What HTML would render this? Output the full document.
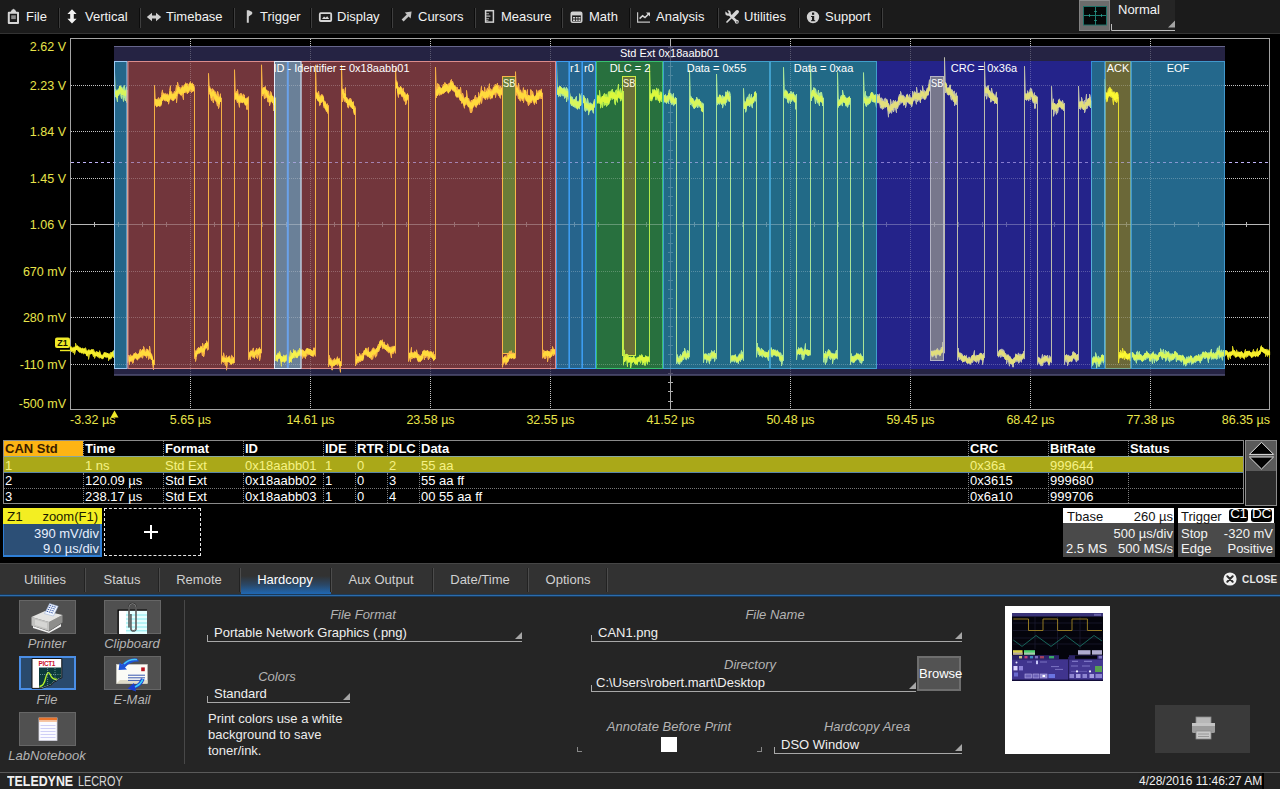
<!DOCTYPE html><html><head><meta charset="utf-8"><title>CAN Decode</title><style>
html,body{margin:0;padding:0;background:#000;}
body{width:1280px;height:789px;overflow:hidden;position:relative;font-family:"Liberation Sans",Arial,sans-serif;color:#fff;}
.abs{position:absolute;}
#menubar{position:absolute;left:0;top:0;width:1280px;height:34px;background:#1b1b1b;border-bottom:1px solid #333;box-sizing:border-box;}
#menubar .mi{position:absolute;top:8px;font-size:13px;line-height:18px;color:#f2f2f2;white-space:nowrap;}
#menubar .sep{position:absolute;top:8px;width:1px;height:20px;background:#3e3e3e;box-shadow:-1px 0 0 #0c0c0c;}
svg text{font-family:"Liberation Sans",Arial,sans-serif;}
.ov .gr g{stroke:#fff}.ov .gr{opacity:0.24}.ov .ax{stroke:#fff;opacity:0.28}.ov .axv{stroke:#fff;opacity:0.2}.ov .trg{stroke:#c8b8ff;opacity:0.6}
#tbl{position:absolute;left:3px;top:440px;width:1241px;height:64px;border:1px solid #8a8a8a;box-sizing:border-box;background:#000;}
.row{position:absolute;left:0;width:1239px;height:16px;font-size:13px;line-height:16px;white-space:nowrap;}
.row span{position:absolute;top:0;height:16px;}
.hdr span{font-weight:bold;}

#tbl .c{position:absolute;top:0;bottom:0;width:0;border-left:1px dotted #808080;}
.desc{position:absolute;font-size:13px;line-height:16px;white-space:nowrap;}
#tabs{position:absolute;left:0;top:563px;width:1280px;height:31px;background:#323232;border-top:1px solid #464646;box-sizing:border-box;border-bottom:0;}
#tabs .tb{position:absolute;top:0;height:30px;line-height:31px;font-size:13px;color:#d4d4d4;text-align:center;}
#tabs .ts{position:absolute;top:4px;width:1px;height:24px;background:#4c4c4c;box-shadow:-1px 0 0 #222;}
#panel{position:absolute;left:0;top:596px;width:1280px;height:177px;background:#252525;}
#footer{position:absolute;left:0;top:772px;width:1280px;height:17px;background:#242424;border-top:1px solid #5a5a5a;box-sizing:border-box;}
.btn{position:absolute;width:57px;height:34px;background:#505050;border:1px solid #666;box-sizing:border-box;}
.lbl{margin-top:0.8px;position:absolute;font-style:italic;font-size:13px;line-height:16px;color:#b4b4b4;white-space:nowrap;transform:translateX(-50%);}
.val{margin-top:0.7px;position:absolute;font-size:13px;line-height:16px;color:#f0f0f0;white-space:nowrap;}
.ul{position:absolute;height:1px;background:#a8a8a8;}
.ul:before{content:"";position:absolute;left:0;top:-6px;width:1px;height:6px;background:#a8a8a8;}
.ul:after{content:"";position:absolute;right:0;top:-9px;border-left:7px solid transparent;border-bottom:7px solid #a6a6a6;}
</style></head><body>
<div id="menubar">
<div class="mi" style="left:26px">File</div>
<div class="mi" style="left:85px">Vertical</div>
<div class="mi" style="left:166px">Timebase</div>
<div class="mi" style="left:260px">Trigger</div>
<div class="mi" style="left:337px">Display</div>
<div class="mi" style="left:418px">Cursors</div>
<div class="mi" style="left:501px">Measure</div>
<div class="mi" style="left:589px">Math</div>
<div class="mi" style="left:656px">Analysis</div>
<div class="mi" style="left:744px">Utilities</div>
<div class="mi" style="left:825px">Support</div>
<div class="sep" style="left:59px"></div>
<div class="sep" style="left:140px"></div>
<div class="sep" style="left:234px"></div>
<div class="sep" style="left:311px"></div>
<div class="sep" style="left:392px"></div>
<div class="sep" style="left:475px"></div>
<div class="sep" style="left:562px"></div>
<div class="sep" style="left:630px"></div>
<div class="sep" style="left:718px"></div>
<div class="sep" style="left:799px"></div>
<div class="sep" style="left:882px"></div>
<svg class="abs" style="left:0;top:0" width="900" height="34" viewBox="0 0 900 34">
<g fill="#d6d6d6" stroke="none">
<!-- File clipboard -->
<path d="M8.8 12.8 H18 V23 H8.8 Z" fill="none" stroke="#d6d6d6" stroke-width="2" stroke-linejoin="round"/>
<path d="M10.6 12 L12 9.6 L13 9.6 L13.4 8.6 L14 9.6 L15 9.6 L16.3 12 Z"/>
<rect x="11.2" y="15.3" width="4.6" height="3.8" fill="#8c8c8c"/>
<!-- Vertical -->
<path d="M72 9.2 L76.6 14 L73.8 14 L73.8 18.8 L76.6 18.8 L72 23.6 L67.4 18.8 L70.2 18.8 L70.2 14 L67.4 14 Z" fill="#f2f2f2"/>
<!-- Timebase -->
<path d="M146.8 17 L152 12.8 L152 15.5 L156 15.5 L156 12.8 L161.2 17 L156 21.2 L156 18.5 L152 18.5 L152 21.2 Z" fill="#cfcfcf"/>
<!-- Trigger flag -->
<path d="M246.8 10.2 L248.8 10.2 L248.8 22.8 L246.8 22.8 Z M248.8 10.2 L252.2 12 L252.2 14 L248.8 16.4 Z" fill="#cfcfcf"/>
<!-- Display -->
<rect x="319.8" y="13.2" width="11.4" height="7.8" rx="1" fill="none" stroke="#d6d6d6" stroke-width="1.8"/>
<path d="M322 19 L324 16.4 L325.6 17.8 L327.2 16.2 L329.2 19 Z"/>
<!-- Cursors arrow -->
<path d="M401.6 19.4 L406.8 14.6 L404.8 12.6 L411.6 11.6 L410.6 18.4 L408.6 16.4 L403.6 21.4 Z" fill="#c4c4c4"/>
<!-- Measure ruler -->
<rect x="485.6" y="10.7" width="7.8" height="11.4" fill="none" stroke="#d0d0d0" stroke-width="1.5"/>
<path d="M486 13.2 h3 v1 h-3z M486 15.6 h4.4 v1.2 h-4.4z M486 18.2 h3 v1 h-3z M486 20.2 h2.4 v0.8 h-2.4z" fill="#b4b4b4"/>
<!-- Math calculator -->
<rect x="571.3" y="12.2" width="10.4" height="10" rx="1.2" fill="none" stroke="#d0d0d0" stroke-width="1.6"/>
<rect x="572" y="13" width="9" height="2.4" fill="#d0d0d0"/>
<path d="M573 17h2v1.5h-2z M575.8 17h1.8v1.5h-1.8z M578.4 17h2v1.5h-2z M573 19.6h2v1.5h-2z M575.8 19.6h1.8v1.5h-1.8z M578.4 19.6h2v1.5h-2z" fill="#d0d0d0"/>
<!-- Analysis -->
<path d="M637.6 12.2 V22.2 H650" fill="none" stroke="#c4c4c4" stroke-width="1.2"/>
<path d="M639.6 18.6 L642.6 15.8 L645 17.6 L648.6 14" fill="none" stroke="#d6d6d6" stroke-width="1.5"/>
<path d="M646 12.4 L650 12.4 L650 16.4 Z"/>
<!-- Utilities -->
<path d="M728.4 13.4 L736.4 21.4" stroke="#d6d6d6" stroke-width="2.6" fill="none" stroke-linecap="round"/>
<circle cx="728" cy="13" r="2.7"/>
<path d="M725 10 L728.4 13.2 L726.6 9.6 Z" fill="#1b1b1b" stroke="#1b1b1b" stroke-width="1.2"/>
<circle cx="736.8" cy="21.8" r="2"/><circle cx="737" cy="22" r="0.8" fill="#1b1b1b"/>
<path d="M737.2 11.8 L733.6 15.4" stroke="#d6d6d6" stroke-width="3.6" fill="none" stroke-linecap="round"/>
<path d="M733.6 15.4 L727 22" stroke="#d6d6d6" stroke-width="1.7" fill="none" stroke-linecap="round"/>
<!-- Support -->
<circle cx="813" cy="17.1" r="6.2" fill="#d2d2d2"/>
<rect x="812" y="16" width="2.2" height="5" fill="#1b1b1b"/><rect x="812" y="12.6" width="2.2" height="2.2" fill="#1b1b1b"/><rect x="811" y="16" width="2" height="1" fill="#1b1b1b"/><rect x="811" y="20.2" width="4.2" height="1" fill="#1b1b1b"/>
</g></svg>
<div class="abs" style="left:1079px;top:0;width:31px;height:31px;background:#6c6c6c;border:1px solid #828282;border-top-color:#8c8c8c;box-sizing:border-box;"></div>
<div class="abs" style="left:1110px;top:0;width:65px;height:30px;background:#252525;"></div>
<svg class="abs" style="left:1079px;top:0" width="100" height="34" viewBox="1079 0 100 34">
<rect x="1083.5" y="6.5" width="23" height="18.5" fill="#040707" stroke="#1d6f66" stroke-width="1"/>
<path d="M1084 15.5 H1106 M1095.5 7 V25" stroke="#1f7e73" stroke-width="1" fill="none"/>
<path d="M1089.5 14 V17 M1101.5 14 V17 M1094 11.5 H1097 M1094 20.5 H1097" stroke="#2a9a8c" stroke-width="0.8" fill="none"/>
<path d="M1111.5 24 V30.5 H1175" stroke="#bdbdbd" stroke-width="1" fill="none"/>
<path d="M1175 20.6 V27.6 H1168 Z" fill="#a4a4a4"/>
</svg>
<div class="abs" style="left:1118px;top:2px;font-size:13px;line-height:16px;color:#f4f4f4;">Normal</div>
</div>
<svg class="abs" style="left:0;top:35px" width="1280" height="400" viewBox="0 35 1280 400">
<g class="gr">
<g stroke="#b4b4b4" stroke-width="1" stroke-dasharray="1 1" fill="none">
<path d="M190.5 39 V409"/>
<path d="M310.5 39 V409"/>
<path d="M430.5 39 V409"/>
<path d="M550.5 39 V409"/>
<path d="M790.5 39 V409"/>
<path d="M910.5 39 V409"/>
<path d="M1030.5 39 V409"/>
<path d="M1150.5 39 V409"/>
<path d="M71 85.5 H1269"/>
<path d="M71 131.5 H1269"/>
<path d="M71 178.5 H1269"/>
<path d="M71 271.5 H1269"/>
<path d="M71 317.5 H1269"/>
<path d="M71 364.5 H1269"/>
</g>
</g>
<g class="ax" stroke="#9c9c9c" stroke-width="1" fill="none">
<path d="M71 224.5 H1269"/>
<path d="M94.5 222 V227"/>
<path d="M118.5 222 V227"/>
<path d="M142.5 222 V227"/>
<path d="M166.5 222 V227"/>
<path d="M214.5 222 V227"/>
<path d="M238.5 222 V227"/>
<path d="M262.5 222 V227"/>
<path d="M286.5 222 V227"/>
<path d="M334.5 222 V227"/>
<path d="M358.5 222 V227"/>
<path d="M382.5 222 V227"/>
<path d="M406.5 222 V227"/>
<path d="M454.5 222 V227"/>
<path d="M478.5 222 V227"/>
<path d="M502.5 222 V227"/>
<path d="M526.5 222 V227"/>
<path d="M574.5 222 V227"/>
<path d="M598.5 222 V227"/>
<path d="M622.5 222 V227"/>
<path d="M646.5 222 V227"/>
<path d="M694.5 222 V227"/>
<path d="M718.5 222 V227"/>
<path d="M742.5 222 V227"/>
<path d="M766.5 222 V227"/>
<path d="M814.5 222 V227"/>
<path d="M838.5 222 V227"/>
<path d="M862.5 222 V227"/>
<path d="M886.5 222 V227"/>
<path d="M934.5 222 V227"/>
<path d="M958.5 222 V227"/>
<path d="M982.5 222 V227"/>
<path d="M1006.5 222 V227"/>
<path d="M1054.5 222 V227"/>
<path d="M1078.5 222 V227"/>
<path d="M1102.5 222 V227"/>
<path d="M1126.5 222 V227"/>
<path d="M1174.5 222 V227"/>
<path d="M1198.5 222 V227"/>
<path d="M1222.5 222 V227"/>
<path d="M1246.5 222 V227"/>
</g>
<g class="axv" stroke="#9c9c9c" stroke-width="1" fill="none">
<path d="M670.5 39 V409"/>
<path d="M668 47.5 H673"/>
<path d="M668 57.5 H673"/>
<path d="M668 66.5 H673"/>
<path d="M668 75.5 H673"/>
<path d="M668 94.5 H673"/>
<path d="M668 103.5 H673"/>
<path d="M668 112.5 H673"/>
<path d="M668 122.5 H673"/>
<path d="M668 140.5 H673"/>
<path d="M668 150.5 H673"/>
<path d="M668 159.5 H673"/>
<path d="M668 168.5 H673"/>
<path d="M668 187.5 H673"/>
<path d="M668 196.5 H673"/>
<path d="M668 205.5 H673"/>
<path d="M668 215.5 H673"/>
<path d="M668 233.5 H673"/>
<path d="M668 243.5 H673"/>
<path d="M668 252.5 H673"/>
<path d="M668 261.5 H673"/>
<path d="M668 280.5 H673"/>
<path d="M668 289.5 H673"/>
<path d="M668 298.5 H673"/>
<path d="M668 308.5 H673"/>
<path d="M668 326.5 H673"/>
<path d="M668 336.5 H673"/>
<path d="M668 345.5 H673"/>
<path d="M668 354.5 H673"/>
<path d="M668 373.5 H673"/>
<path d="M668 382.5 H673"/>
<path d="M668 391.5 H673"/>
<path d="M668 401.5 H673"/>
</g>
<path class="trg" d="M71 162.5 H1269" stroke="#b4b0f0" stroke-width="1" stroke-dasharray="3 3" fill="none"/>
<rect x="70.5" y="38.5" width="1199" height="371" stroke="#a4a4a4" fill="none"/>
<rect x="114" y="46" width="1111" height="329.5" fill="#252343"/>
<rect x="114" y="46" width="1111" height="1" fill="#66668c"/>
<rect x="114" y="374.5" width="1111" height="1" fill="#66668c"/>
<rect x="114.0" y="61.0" width="13.5" height="308.0" fill="#24668a"/>
<rect x="127.5" y="61.0" width="428.5" height="308.0" fill="#72363c"/>
<rect x="274.0" y="61.0" width="27.5" height="308.0" fill="#6a8098"/>
<rect x="502.0" y="76.0" width="14.0" height="278.0" fill="#6a7c38"/>
<rect x="556.0" y="61.0" width="40.0" height="308.0" fill="#26648c"/>
<rect x="596.0" y="61.0" width="67.0" height="308.0" fill="#28703e"/>
<rect x="622.0" y="76.0" width="14.0" height="280.0" fill="#6c7038"/>
<rect x="663.0" y="61.0" width="107.0" height="308.0" fill="#226a87"/>
<rect x="770.0" y="61.0" width="107.0" height="308.0" fill="#226a87"/>
<rect x="877.0" y="61.0" width="214.0" height="308.0" fill="#24238a"/>
<rect x="930.0" y="76.0" width="14.0" height="285.0" fill="#77778c"/>
<rect x="1091.0" y="61.0" width="14.0" height="308.0" fill="#24668a"/>
<rect x="1105.0" y="61.0" width="26.0" height="308.0" fill="#6b6838"/>
<rect x="1131.0" y="61.0" width="94.0" height="308.0" fill="#24688c"/>
<g class="ov"><g class="gr">
<g stroke="#b4b4b4" stroke-width="1" stroke-dasharray="1 1" fill="none">
<path d="M190.5 39 V409"/>
<path d="M310.5 39 V409"/>
<path d="M430.5 39 V409"/>
<path d="M550.5 39 V409"/>
<path d="M790.5 39 V409"/>
<path d="M910.5 39 V409"/>
<path d="M1030.5 39 V409"/>
<path d="M1150.5 39 V409"/>
<path d="M71 85.5 H1269"/>
<path d="M71 131.5 H1269"/>
<path d="M71 178.5 H1269"/>
<path d="M71 271.5 H1269"/>
<path d="M71 317.5 H1269"/>
<path d="M71 364.5 H1269"/>
</g>
</g>
<g class="ax" stroke="#9c9c9c" stroke-width="1" fill="none">
<path d="M71 224.5 H1269"/>
<path d="M94.5 222 V227"/>
<path d="M118.5 222 V227"/>
<path d="M142.5 222 V227"/>
<path d="M166.5 222 V227"/>
<path d="M214.5 222 V227"/>
<path d="M238.5 222 V227"/>
<path d="M262.5 222 V227"/>
<path d="M286.5 222 V227"/>
<path d="M334.5 222 V227"/>
<path d="M358.5 222 V227"/>
<path d="M382.5 222 V227"/>
<path d="M406.5 222 V227"/>
<path d="M454.5 222 V227"/>
<path d="M478.5 222 V227"/>
<path d="M502.5 222 V227"/>
<path d="M526.5 222 V227"/>
<path d="M574.5 222 V227"/>
<path d="M598.5 222 V227"/>
<path d="M622.5 222 V227"/>
<path d="M646.5 222 V227"/>
<path d="M694.5 222 V227"/>
<path d="M718.5 222 V227"/>
<path d="M742.5 222 V227"/>
<path d="M766.5 222 V227"/>
<path d="M814.5 222 V227"/>
<path d="M838.5 222 V227"/>
<path d="M862.5 222 V227"/>
<path d="M886.5 222 V227"/>
<path d="M934.5 222 V227"/>
<path d="M958.5 222 V227"/>
<path d="M982.5 222 V227"/>
<path d="M1006.5 222 V227"/>
<path d="M1054.5 222 V227"/>
<path d="M1078.5 222 V227"/>
<path d="M1102.5 222 V227"/>
<path d="M1126.5 222 V227"/>
<path d="M1174.5 222 V227"/>
<path d="M1198.5 222 V227"/>
<path d="M1222.5 222 V227"/>
<path d="M1246.5 222 V227"/>
</g>
<g class="axv" stroke="#9c9c9c" stroke-width="1" fill="none">
<path d="M670.5 39 V409"/>
<path d="M668 47.5 H673"/>
<path d="M668 57.5 H673"/>
<path d="M668 66.5 H673"/>
<path d="M668 75.5 H673"/>
<path d="M668 94.5 H673"/>
<path d="M668 103.5 H673"/>
<path d="M668 112.5 H673"/>
<path d="M668 122.5 H673"/>
<path d="M668 140.5 H673"/>
<path d="M668 150.5 H673"/>
<path d="M668 159.5 H673"/>
<path d="M668 168.5 H673"/>
<path d="M668 187.5 H673"/>
<path d="M668 196.5 H673"/>
<path d="M668 205.5 H673"/>
<path d="M668 215.5 H673"/>
<path d="M668 233.5 H673"/>
<path d="M668 243.5 H673"/>
<path d="M668 252.5 H673"/>
<path d="M668 261.5 H673"/>
<path d="M668 280.5 H673"/>
<path d="M668 289.5 H673"/>
<path d="M668 298.5 H673"/>
<path d="M668 308.5 H673"/>
<path d="M668 326.5 H673"/>
<path d="M668 336.5 H673"/>
<path d="M668 345.5 H673"/>
<path d="M668 354.5 H673"/>
<path d="M668 373.5 H673"/>
<path d="M668 382.5 H673"/>
<path d="M668 391.5 H673"/>
<path d="M668 401.5 H673"/>
</g>
<path class="trg" d="M71 162.5 H1269" stroke="#b4b0f0" stroke-width="1" stroke-dasharray="3 3" fill="none"/></g>
<g fill="none" stroke-linejoin="round">
<path d="M70.5 346.3 L70.5 350.4 L71.5 351.7 L71.5 346.8 L72.5 347.6 L72.5 351.8 L73.5 353.1 L73.5 347.1 L74.5 346.9 L74.5 354.5 L75.5 350.7 L75.5 343.2 L76.5 345.7 L76.5 349.5 L77.5 350.5 L77.5 345.8 L78.5 346.6 L78.5 351.1 L79.5 352.5 L79.5 347.1 L80.5 347.7 L80.5 352.3 L81.5 353.2 L81.5 348.5 L82.5 348 L82.5 353.2 L83.5 354 L83.5 348.5 L84.5 348.7 L84.5 353.5 L85.5 353.8 L85.5 347.7 L86.5 350.5 L86.5 355.6 L87.5 356.2 L87.5 350.8 L88.5 349.6 L88.5 359.4 L89.5 355.1 L89.5 349.9 L90.5 350.1 L90.5 354 L91.5 353.5 L91.5 349.5 L92.5 349.6 L92.5 353.9 L93.5 356.8 L93.5 349.4 L94.5 352.1 L94.5 358.4 L95.5 356.4 L95.5 352.3 L96.5 351.2 L96.5 356 L97.5 356.9 L97.5 352 L98.5 352.3 L98.5 357.6 L99.5 358.2 L99.5 350.7 L100.5 353.1 L100.5 357.8 L101.5 358.6 L101.5 354.8 L102.5 354.8 L102.5 358.9 L103.5 358.1 L103.5 353.9 L104.5 352 L104.5 356.7 L105.5 356.8 L105.5 352.7 L106.5 352.8 L106.5 357.7 L107.5 357.5 L107.5 353.1 L108.5 354.1 L108.5 360.8 L109.5 358.5 L109.5 354 L110.5 352.4 L110.5 359.2 L111.5 358 L111.5 352.7 L112.5 351.8 L112.5 356.1 L113.5 357.9 L113.5 350.7 L114.5 357.1" stroke="#d2ca1c" stroke-width="1"/><path d="M70.5 346.8 L70.5 349.4 L71.5 350.9 L71.5 348.5 L72.5 348.5 L72.5 350.4 L73.5 350.6 L73.5 348.5 L74.5 348.1 L74.5 351 L75.5 350 L75.5 347 L76.5 346.4 L76.5 349.4 L77.5 349.1 L77.5 346.2 L78.5 348.3 L78.5 350.3 L79.5 351.6 L79.5 348.9 L80.5 348.4 L80.5 351.8 L81.5 352.5 L81.5 349.1 L82.5 349.1 L82.5 352.1 L83.5 352.2 L83.5 349.8 L84.5 348.8 L84.5 352.1 L85.5 353.2 L85.5 350 L86.5 351.3 L86.5 355.1 L87.5 355 L87.5 352.4 L88.5 350.7 L88.5 353.7 L89.5 353.6 L89.5 351.3 L90.5 351.1 L90.5 353.8 L91.5 353.3 L91.5 350.1 L92.5 350 L92.5 353.4 L93.5 354.3 L93.5 351.8 L94.5 352.4 L94.5 355.4 L95.5 355.7 L95.5 353.2 L96.5 353 L96.5 355.2 L97.5 356 L97.5 352.3 L98.5 353.2 L98.5 355.7 L99.5 356.7 L99.5 353 L100.5 354.5 L100.5 357 L101.5 357.7 L101.5 355.6 L102.5 356.2 L102.5 358.1 L103.5 357.7 L103.5 354.9 L104.5 353.6 L104.5 356 L105.5 356.9 L105.5 353.1 L106.5 354.3 L106.5 356.2 L107.5 356.4 L107.5 353.5 L108.5 354.4 L108.5 356.9 L109.5 358.6 L109.5 355.2 L110.5 355.1 L110.5 357.5 L111.5 356.5 L111.5 353.2 L112.5 352.2 L112.5 356 L113.5 356.2 L113.5 352.7" stroke="#f6ee2c" stroke-width="1.2"/>
<path d="M1224.5 351.1 L1225.5 350.5 L1225.5 355.8 L1226.5 354.9 L1226.5 350.8 L1227.5 352.1 L1227.5 357.4 L1228.5 359.9 L1228.5 352.5 L1229.5 351.9 L1229.5 357.4 L1230.5 358.8 L1230.5 351.7 L1231.5 351.3 L1231.5 355.6 L1232.5 354.8 L1232.5 346.2 L1233.5 350.1 L1233.5 355.2 L1234.5 356.3 L1234.5 350.4 L1235.5 352.5 L1235.5 357.5 L1236.5 356.9 L1236.5 349.8 L1237.5 352 L1237.5 356.4 L1238.5 356 L1238.5 351.8 L1239.5 352.1 L1239.5 357.2 L1240.5 358.7 L1240.5 352.2 L1241.5 351.1 L1241.5 357.5 L1242.5 357.5 L1242.5 352.4 L1243.5 353.6 L1243.5 358.4 L1244.5 359.2 L1244.5 351.8 L1245.5 349.4 L1245.5 357.2 L1246.5 357.3 L1246.5 351.5 L1247.5 351.2 L1247.5 356.8 L1248.5 355.4 L1248.5 351.1 L1249.5 351.1 L1249.5 355.1 L1250.5 356.3 L1250.5 352.6 L1251.5 352.7 L1251.5 357.5 L1252.5 357.2 L1252.5 352.2 L1253.5 349.3 L1253.5 356.6 L1254.5 355.8 L1254.5 351.2 L1255.5 351.7 L1255.5 356.8 L1256.5 355.9 L1256.5 350.9 L1257.5 348.5 L1257.5 356.6 L1258.5 356.3 L1258.5 351.8 L1259.5 350.3 L1259.5 354.5 L1260.5 352.7 L1260.5 347.1 L1261.5 345.6 L1261.5 351.1 L1262.5 351.8 L1262.5 347.1 L1263.5 348.5 L1263.5 352.7 L1264.5 353.5 L1264.5 348.9 L1265.5 349.6 L1265.5 356.6 L1266.5 354.6 L1266.5 349.2 L1267.5 349.5 L1267.5 356.6 L1268.5 354.2 L1268.5 350.4 L1269.5 349.1 L1269.5 358.2" stroke="#d2ca1c" stroke-width="1"/><path d="M1224.5 351.3 L1225.5 351.2 L1225.5 353.8 L1226.5 353.8 L1226.5 350.8 L1227.5 352.3 L1227.5 356.1 L1228.5 356.1 L1228.5 353.4 L1229.5 352.6 L1229.5 355.3 L1230.5 355.6 L1230.5 352.8 L1231.5 352.4 L1231.5 354.9 L1232.5 354 L1232.5 350.9 L1233.5 350.8 L1233.5 353.1 L1234.5 354.3 L1234.5 350.9 L1235.5 352.7 L1235.5 356.2 L1236.5 356.6 L1236.5 352.9 L1237.5 352.9 L1237.5 355.4 L1238.5 356 L1238.5 352.9 L1239.5 352.5 L1239.5 356.2 L1240.5 356.3 L1240.5 352.5 L1241.5 352.4 L1241.5 355.4 L1242.5 356.2 L1242.5 353.4 L1243.5 354.4 L1243.5 357.4 L1244.5 356.5 L1244.5 353.6 L1245.5 352.3 L1245.5 355.6 L1246.5 354.8 L1246.5 351.9 L1247.5 351.6 L1247.5 355.3 L1248.5 354.1 L1248.5 352 L1249.5 351.5 L1249.5 354.4 L1250.5 355.5 L1250.5 352.7 L1251.5 353.3 L1251.5 357.1 L1252.5 355.7 L1252.5 352.4 L1253.5 352.3 L1253.5 355.4 L1254.5 355.7 L1254.5 352.3 L1255.5 353 L1255.5 356.2 L1256.5 355.1 L1256.5 352.6 L1257.5 352.5 L1257.5 355.5 L1258.5 355.3 L1258.5 352.2 L1259.5 351.2 L1259.5 354.5 L1260.5 352.2 L1260.5 349.4 L1261.5 347.1 L1261.5 351 L1262.5 351.5 L1262.5 347.8 L1263.5 349.3 L1263.5 352.2 L1264.5 352.5 L1264.5 349.5 L1265.5 349.6 L1265.5 353.1 L1266.5 354.1 L1266.5 350.6 L1267.5 351.5 L1267.5 354.7 L1268.5 354.3 L1268.5 351 L1269.5 351.8 L1269.5 355.2" stroke="#f6ee2c" stroke-width="1.2"/>
<path d="M113.5 350.7 L114.5 357.1 L114.5 72.1 L115.5 97.1 L115.5 89.1 L116.5 90.3 L116.5 97.4 L117.5 101.9 L117.5 90.2 L118.5 88.6 L118.5 95.8 L119.5 94.5 L119.5 86.5 L120.5 85.6 L120.5 94.5 L121.5 98.6 L121.5 86.7 L122.5 88.3 L122.5 95.7 L123.5 101.5 L123.5 86.7 L124.5 85.4 L124.5 98.6 L125.5 101 L125.5 90.7 L126.5 86.8 L126.5 102.3 L127.5 90.2" stroke="#a8e498" stroke-width="1"/><path d="M115.5 94.8 L115.5 91.9 L116.5 91.1 L116.5 97.2 L117.5 97.5 L117.5 90.8 L118.5 90.5 L118.5 94.2 L119.5 92.9 L119.5 86.7 L120.5 86.8 L120.5 91.3 L121.5 94.4 L121.5 88.5 L122.5 89.4 L122.5 94.4 L123.5 94.7 L123.5 90.3 L124.5 91.7 L124.5 95.1 L125.5 95.7 L125.5 91 L126.5 90.1 L126.5 94.9" stroke="#d8f65c" stroke-width="1.2"/>
<path d="M126.5 102.3 L127.5 90.2 L127.5 362.8 L128.5 355 L128.5 359.7 L129.5 364.7 L129.5 355.8 L130.5 354.6 L130.5 361.6 L131.5 361.7 L131.5 355.7 L132.5 355.6 L132.5 363.4 L133.5 362.7 L133.5 354.1 L134.5 353 L134.5 359.3 L135.5 357.9 L135.5 352.4 L136.5 353.7 L136.5 359.3 L137.5 360.1 L137.5 354.2 L138.5 353.5 L138.5 359.2 L139.5 357.9 L139.5 350.6 L140.5 349 L140.5 357.3 L141.5 357.4 L141.5 350.5 L142.5 349.3 L142.5 358.3 L143.5 354.9 L143.5 346.4 L144.5 348.5 L144.5 355.6 L145.5 356.2 L145.5 351.2 L146.5 348.8 L146.5 358.1 L147.5 355.1 L147.5 349 L148.5 350.9 L148.5 359.6 L149.5 358.6 L149.5 346 L150.5 351.8 L150.5 357.8 L151.5 359.8 L151.5 353.7 L152.5 358.4 L152.5 363.4 L153.5 369.8 L153.5 359.8 L154.5 364.9 L154.5 85.4 L155.5 105.6 L155.5 99 L156.5 99.9 L156.5 107 L157.5 106.3 L157.5 99.5 L158.5 97.5 L158.5 105.7 L159.5 106.3 L159.5 99.2 L160.5 97.4 L160.5 106.3 L161.5 104.6 L161.5 94.2 L162.5 89.9 L162.5 100.9 L163.5 99.6 L163.5 92.9 L164.5 93.6 L164.5 100.6 L165.5 101.1 L165.5 93.3 L166.5 94 L166.5 100.5 L167.5 101.4 L167.5 93.7 L168.5 95.2 L168.5 104.2 L169.5 100.4 L169.5 90.5 L170.5 85.7 L170.5 98.9 L171.5 100.1 L171.5 91.5 L172.5 94.4 L172.5 100.7 L173.5 100.2 L173.5 93.7 L174.5 91.1 L174.5 99.6 L175.5 98.8 L175.5 91.4 L176.5 85.3 L176.5 102.9 L177.5 94.5 L177.5 82.1 L178.5 85.8 L178.5 93.7 L179.5 94 L179.5 86.8 L180.5 88.2 L180.5 95.1 L181.5 95.7 L181.5 87.8 L182.5 85.6 L182.5 95.6 L183.5 99.8 L183.5 86.7 L184.5 84.5 L184.5 92.3 L185.5 92.7 L185.5 82.8 L186.5 83.5 L186.5 91.9 L187.5 94 L187.5 83.5 L188.5 84.4 L188.5 92.9 L189.5 90.4 L189.5 83.4 L190.5 81.6 L190.5 90.9 L191.5 92.7 L191.5 84 L192.5 82.8 L192.5 92 L193.5 90.7 L193.5 84.1 L194.5 88 L194.5 358.6 L195.5 350.6 L195.5 361.5 L196.5 357.5 L196.5 350.7 L197.5 348.3 L197.5 354.2 L198.5 353.7 L198.5 347 L199.5 348.3 L199.5 353.3 L200.5 352.6 L200.5 346.2 L201.5 346.5 L201.5 351.9 L202.5 356 L202.5 343.1 L203.5 345.9 L203.5 357 L204.5 354.4 L204.5 345.8 L205.5 343.6 L205.5 349.2 L206.5 348.3 L206.5 340.7 L207.5 342.5 L207.5 350.2 L208.5 349.5 L208.5 73.4 L209.5 94.3 L209.5 86.1 L210.5 89.3 L210.5 96.6 L211.5 100.6 L211.5 89.1 L212.5 88.6 L212.5 100.6 L213.5 103 L213.5 89.6 L214.5 91.6 L214.5 99.1 L215.5 101.3 L215.5 91.7 L216.5 95 L216.5 102.8 L217.5 106.2 L217.5 91.2 L218.5 93.6 L218.5 108.6 L219.5 105.6 L219.5 97.2 L220.5 93.7 L220.5 102 L221.5 97.9 L221.5 363.6 L222.5 355.8 L222.5 361.7 L223.5 362.5 L223.5 352.8 L224.5 356.6 L224.5 362.7 L225.5 365.5 L225.5 357.7 L226.5 355.5 L226.5 370.2 L227.5 362.5 L227.5 357.7 L228.5 356.6 L228.5 361.8 L229.5 362.7 L229.5 355.8 L230.5 358.6 L230.5 364.3 L231.5 364.3 L231.5 355.2 L232.5 356.1 L232.5 363.5 L233.5 363.3 L233.5 357.4 L234.5 362.9 L234.5 69.7 L235.5 99.3 L235.5 93.2 L236.5 91.2 L236.5 99.8 L237.5 102.9 L237.5 89.5 L238.5 95.9 L238.5 102.6 L239.5 107.4 L239.5 94.7 L240.5 93.3 L240.5 102.8 L241.5 102.5 L241.5 93.5 L242.5 96 L242.5 102.8 L243.5 102.3 L243.5 94.1 L244.5 95 L244.5 103.3 L245.5 105.2 L245.5 98.5 L246.5 98 L246.5 109.4 L247.5 109.6 L247.5 97.6 L248.5 96.6 L248.5 359.8 L249.5 351.9 L249.5 358.7 L250.5 360 L250.5 350.8 L251.5 350.7 L251.5 356.4 L252.5 357.5 L252.5 349.3 L253.5 347.9 L253.5 357.4 L254.5 358.7 L254.5 352.1 L255.5 349.8 L255.5 355.4 L256.5 357.7 L256.5 348.1 L257.5 349.4 L257.5 358.8 L258.5 354.9 L258.5 349.7 L259.5 347.5 L259.5 360.9 L260.5 357.2 L260.5 348.9 L261.5 353.2 L261.5 64.8 L262.5 96.1 L262.5 88.5 L263.5 87.3 L263.5 93.9 L264.5 98.9 L264.5 87 L265.5 86.3 L265.5 98.1 L266.5 97.6 L266.5 89.7 L267.5 91.1 L267.5 101.7 L268.5 102.2 L268.5 90.9 L269.5 95.4 L269.5 105.8 L270.5 102 L270.5 91.4 L271.5 93 L271.5 101.2 L272.5 102.4 L272.5 95.8 L273.5 97.5 L273.5 110.1 L274.5 111.3" stroke="#f6b044" stroke-width="1"/><path d="M128.5 354.9 L128.5 359.4 L129.5 361.4 L129.5 357.3 L130.5 357.6 L130.5 360.5 L131.5 360 L131.5 356.9 L132.5 356.5 L132.5 359.8 L133.5 359.9 L133.5 355.8 L134.5 354.3 L134.5 357.2 L135.5 357.6 L135.5 354.3 L136.5 354.1 L136.5 358.1 L137.5 359.1 L137.5 355 L138.5 354.5 L138.5 357.4 L139.5 356.9 L139.5 352.8 L140.5 352.4 L140.5 356.2 L141.5 355.5 L141.5 351.9 L142.5 350.3 L142.5 354.8 L143.5 354.7 L143.5 350.4 L144.5 351.9 L144.5 354.8 L145.5 355.6 L145.5 352.4 L146.5 351.7 L146.5 355.1 L147.5 355.2 L147.5 350.3 L148.5 351.8 L148.5 355.2 L149.5 355.8 L149.5 352.8 L150.5 353.7 L150.5 356.5 L151.5 359.3 L151.5 355.7 L152.5 358.7 L152.5 362.5 L153.5 364.7 L153.5 359.9 M155.5 104.4 L155.5 99.5 L156.5 99.9 L156.5 106.1 L157.5 105.6 L157.5 99.8 L158.5 101 L158.5 105.3 L159.5 105.8 L159.5 99.9 L160.5 100 L160.5 104.7 L161.5 103.1 L161.5 98.5 L162.5 95.7 L162.5 99.8 L163.5 97.9 L163.5 94.7 L164.5 94.9 L164.5 99.9 L165.5 99 L165.5 95.2 L166.5 95.6 L166.5 99.8 L167.5 101.3 L167.5 95.7 L168.5 96.1 L168.5 100.7 L169.5 99.3 L169.5 94.1 L170.5 92.1 L170.5 98 L171.5 97.8 L171.5 94.2 L172.5 94.7 L172.5 99.5 L173.5 100.2 L173.5 94 L174.5 94.1 L174.5 98 L175.5 97.4 L175.5 93.2 L176.5 91.3 L176.5 95.7 L177.5 92.3 L177.5 88.8 L178.5 87.2 L178.5 91.4 L179.5 92.6 L179.5 89.1 L180.5 90.6 L180.5 94.1 L181.5 94.1 L181.5 88.8 L182.5 87.3 L182.5 92.6 L183.5 93.2 L183.5 88.6 L184.5 86.1 L184.5 92.4 L185.5 89.2 L185.5 84.5 L186.5 84.7 L186.5 90.7 L187.5 92.2 L187.5 86.3 L188.5 88 L188.5 91.1 L189.5 89.7 L189.5 84.1 L190.5 83.5 L190.5 88.6 L191.5 89.4 L191.5 84.1 L192.5 85.6 L192.5 90 L193.5 90.5 L193.5 85.7 M195.5 352.7 L195.5 356.2 L196.5 355.7 L196.5 351.5 L197.5 350.6 L197.5 353.3 L198.5 352 L198.5 349 L199.5 348.6 L199.5 352.7 L200.5 351.7 L200.5 348.1 L201.5 347.1 L201.5 350.9 L202.5 352 L202.5 349.1 L203.5 348.6 L203.5 351.8 L204.5 350.3 L204.5 347 L205.5 343.5 L205.5 347.3 L206.5 347.3 L206.5 342.8 L207.5 343.3 L207.5 346.2 M209.5 92 L209.5 88.3 L210.5 89.9 L210.5 94.4 L211.5 97.7 L211.5 92.8 L212.5 91.7 L212.5 95.8 L213.5 95.6 L213.5 90.9 L214.5 94 L214.5 97.1 L215.5 99.6 L215.5 94.4 L216.5 96.8 L216.5 100.7 L217.5 102.2 L217.5 96.5 L218.5 98.3 L218.5 103.6 L219.5 103.2 L219.5 98 L220.5 96.9 L220.5 101.7 M222.5 357.4 L222.5 361.1 L223.5 361.4 L223.5 357.8 L224.5 358.6 L224.5 361.2 L225.5 361.6 L225.5 358.4 L226.5 359.1 L226.5 362 L227.5 361.4 L227.5 358.6 L228.5 357.3 L228.5 361.6 L229.5 361.7 L229.5 358.1 L230.5 360.3 L230.5 362.9 L231.5 363.8 L231.5 360 L232.5 359.4 L232.5 362.3 L233.5 362.6 L233.5 357.8 M235.5 99.4 L235.5 93.4 L236.5 93.9 L236.5 97.5 L237.5 100.3 L237.5 93.9 L238.5 97.7 L238.5 101.8 L239.5 102.3 L239.5 96.8 L240.5 96.3 L240.5 100.3 L241.5 101.8 L241.5 95.8 L242.5 97.7 L242.5 102.2 L243.5 101.6 L243.5 97.6 L244.5 97.6 L244.5 102.1 L245.5 104.9 L245.5 99.2 L246.5 100.4 L246.5 104.6 L247.5 103.1 L247.5 98.3 M249.5 353.3 L249.5 356.5 L250.5 355.5 L250.5 353 L251.5 351.4 L251.5 354.8 L252.5 354.9 L252.5 351.7 L253.5 352.4 L253.5 356.1 L254.5 357.1 L254.5 353.1 L255.5 351.5 L255.5 354.6 L256.5 353.3 L256.5 350.4 L257.5 350.7 L257.5 353.1 L258.5 354.4 L258.5 349.6 L259.5 349 L259.5 353 L260.5 352.5 L260.5 349.3 M262.5 94.1 L262.5 90.3 L263.5 88.2 L263.5 93.6 L264.5 92.3 L264.5 88.4 L265.5 89.9 L265.5 93.7 L266.5 95.6 L266.5 90.6 L267.5 93.4 L267.5 97.1 L268.5 98.2 L268.5 95.3 L269.5 96.6 L269.5 101.4 L270.5 101.6 L270.5 96.4 L271.5 94.8 L271.5 99.7 L272.5 102.6 L272.5 96.4 L273.5 100.8 L273.5 104.1 L274.5 105.1" stroke="#ffda3c" stroke-width="1.2"/>
<path d="M273.5 110.1 L274.5 111.3 L274.5 98.9 L275.5 97.7 L275.5 360.8 L276.5 354.8 L276.5 360.9 L277.5 361.6 L277.5 353.3 L278.5 352.9 L278.5 359.1 L279.5 358 L279.5 351.5 L280.5 354.5 L280.5 359.5 L281.5 366.3 L281.5 356.3 L282.5 356.6 L282.5 361.6 L283.5 361.8 L283.5 355 L284.5 355.5 L284.5 362.7 L285.5 361.3 L285.5 355.3 L286.5 354.7 L286.5 360.8 L287.5 360.6 L287.5 355.4 L288.5 356.2 L288.5 362.3 L289.5 362.8 L289.5 357.1 L290.5 350.6 L290.5 361.2 L291.5 362.4 L291.5 352.4 L292.5 353.7 L292.5 358.6 L293.5 357.8 L293.5 349.4 L294.5 351.1 L294.5 357.9 L295.5 357.4 L295.5 350.5 L296.5 352.8 L296.5 357.7 L297.5 357.7 L297.5 351.5 L298.5 349.8 L298.5 356 L299.5 355.7 L299.5 348.2 L300.5 349.5 L300.5 355.7 L301.5 356.1" stroke="#dcdc5c" stroke-width="1"/><path d="M273.5 104.1 L274.5 105.1 L274.5 99.6 M276.5 355.3 L276.5 359.1 L277.5 359.8 L277.5 355.3 L278.5 354.8 L278.5 357.9 L279.5 357.8 L279.5 354.3 L280.5 356 L280.5 359 L281.5 361.6 L281.5 356.7 L282.5 358.1 L282.5 361.1 L283.5 360.5 L283.5 357.4 L284.5 356.9 L284.5 361.3 L285.5 360.4 L285.5 356.6 L286.5 355.8 L286.5 359.3 L287.5 360.4 L287.5 356.7 L288.5 357.9 L288.5 362.1 L289.5 362.3 L289.5 358 L290.5 357 L290.5 361.1 L291.5 358.5 L291.5 355.9 L292.5 353.6 L292.5 358 L293.5 356.7 L293.5 352.7 L294.5 351.3 L294.5 355 L295.5 355.5 L295.5 352.6 L296.5 353.8 L296.5 357.1 L297.5 356.7 L297.5 354.1 L298.5 352 L298.5 354.9 L299.5 353.6 L299.5 351.3 L300.5 350.4 L300.5 353.6 L301.5 353.8" stroke="#f6f24c" stroke-width="1.2"/>
<path d="M300.5 355.7 L301.5 356.1 L301.5 349.9 L302.5 349.6 L302.5 358.5 L303.5 356.3 L303.5 350.5 L304.5 351.5 L304.5 356.9 L305.5 358.6 L305.5 351.2 L306.5 348.5 L306.5 356.4 L307.5 354 L307.5 348.5 L308.5 348.9 L308.5 354.8 L309.5 354.2 L309.5 349.1 L310.5 349.4 L310.5 354.9 L311.5 355.5 L311.5 350.5 L312.5 350.9 L312.5 356.3 L313.5 356.6 L313.5 347.9 L314.5 347.9 L314.5 354.7 L315.5 356.3 L315.5 64.9 L316.5 98.7 L316.5 91.9 L317.5 93 L317.5 100.1 L318.5 101 L318.5 91.1 L319.5 96.6 L319.5 105.7 L320.5 104.9 L320.5 95.8 L321.5 94.4 L321.5 102.8 L322.5 101.7 L322.5 94.7 L323.5 97.8 L323.5 106.7 L324.5 108.3 L324.5 100.9 L325.5 101.7 L325.5 108.9 L326.5 111.8 L326.5 104 L327.5 103.7 L327.5 113.4 L328.5 105.4 L328.5 366.9 L329.5 355.4 L329.5 363.9 L330.5 366.1 L330.5 357.8 L331.5 360.3 L331.5 369.7 L332.5 370 L332.5 360.1 L333.5 359.5 L333.5 366 L334.5 365.2 L334.5 358.3 L335.5 359.8 L335.5 365 L336.5 364 L336.5 359.2 L337.5 356.7 L337.5 365.6 L338.5 364.4 L338.5 358.8 L339.5 358.2 L339.5 366.4 L340.5 372.3 L340.5 361.3 L341.5 366 L341.5 65.2 L342.5 102 L342.5 89 L343.5 89 L343.5 98.5 L344.5 101.6 L344.5 92.6 L345.5 87.5 L345.5 101.4 L346.5 103 L346.5 97 L347.5 99 L347.5 107.2 L348.5 108 L348.5 99.8 L349.5 98.5 L349.5 105.4 L350.5 107.2 L350.5 98.2 L351.5 100.2 L351.5 107.5 L352.5 108.5 L352.5 102.1 L353.5 101.6 L353.5 111 L354.5 115 L354.5 105.8 L355.5 107.7 L355.5 365.9 L356.5 354.6 L356.5 364.3 L357.5 362 L357.5 356.4 L358.5 356.3 L358.5 362.8 L359.5 361.4 L359.5 353.1 L360.5 355.1 L360.5 361.8 L361.5 360.2 L361.5 354.8 L362.5 353 L362.5 361 L363.5 358.7 L363.5 351.6 L364.5 350 L364.5 355 L365.5 355.1 L365.5 348.3 L366.5 348.3 L366.5 354.8 L367.5 356.6 L367.5 349.2 L368.5 347.4 L368.5 356.5 L369.5 357.4 L369.5 352.2 L370.5 351.5 L370.5 358.2 L371.5 359.6 L371.5 351.7 L372.5 348.5 L372.5 359.4 L373.5 356.2 L373.5 347.7 L374.5 348.9 L374.5 354.9 L375.5 357.4 L375.5 349.8 L376.5 348.2 L376.5 356.3 L377.5 351.5 L377.5 346.9 L378.5 344.1 L378.5 351.9 L379.5 349.9 L379.5 342.7 L380.5 340.8 L380.5 348 L381.5 345.3 L381.5 340.4 L382.5 339.8 L382.5 348.8 L383.5 348.5 L383.5 342.2 L384.5 342.1 L384.5 348.7 L385.5 349.7 L385.5 344.8 L386.5 345.3 L386.5 350.9 L387.5 351.8 L387.5 343.7 L388.5 345.6 L388.5 352.8 L389.5 352.7 L389.5 346.9 L390.5 347.1 L390.5 354 L391.5 358 L391.5 346.8 L392.5 346.4 L392.5 353.8 L393.5 353.6 L393.5 346.2 L394.5 346.2 L394.5 351.4 L395.5 353.3 L395.5 68 L396.5 88.4 L396.5 80.6 L397.5 82.8 L397.5 93.2 L398.5 97.5 L398.5 86.9 L399.5 87.5 L399.5 93.9 L400.5 94.2 L400.5 86.2 L401.5 87.8 L401.5 96.2 L402.5 97.2 L402.5 88.7 L403.5 88.1 L403.5 99.1 L404.5 101.4 L404.5 91.9 L405.5 94.2 L405.5 104.9 L406.5 103.6 L406.5 95 L407.5 93.4 L407.5 100.2 L408.5 94.9 L408.5 361.5 L409.5 352.8 L409.5 358.1 L410.5 361.8 L410.5 353 L411.5 347.3 L411.5 359 L412.5 358.5 L412.5 352.5 L413.5 352.5 L413.5 357.7 L414.5 358.1 L414.5 351.2 L415.5 351.8 L415.5 357.7 L416.5 358 L416.5 349.8 L417.5 354.1 L417.5 359.7 L418.5 362.1 L418.5 354.2 L419.5 355.2 L419.5 361.7 L420.5 361.7 L420.5 356.4 L421.5 354.3 L421.5 360.5 L422.5 358.4 L422.5 352 L423.5 350.7 L423.5 356.8 L424.5 359.9 L424.5 349.9 L425.5 351.3 L425.5 358 L426.5 356.8 L426.5 351.1 L427.5 350 L427.5 356.7 L428.5 360 L428.5 351.1 L429.5 351.6 L429.5 358.6 L430.5 356.3 L430.5 351.1 L431.5 351.7 L431.5 357 L432.5 358.5 L432.5 353 L433.5 351.6 L433.5 360.7 L434.5 359.8 L434.5 354.4 L435.5 359 L435.5 67.1 L436.5 97.8 L436.5 89 L437.5 83.4 L437.5 95.8 L438.5 93.8 L438.5 83.9 L439.5 86.1 L439.5 95.4 L440.5 94.8 L440.5 87.4 L441.5 88.3 L441.5 94.6 L442.5 93.7 L442.5 86.6 L443.5 84.1 L443.5 93.7 L444.5 92 L444.5 82.6 L445.5 82.9 L445.5 91.8 L446.5 90.6 L446.5 84.6 L447.5 84.7 L447.5 91.4 L448.5 93.2 L448.5 83.9 L449.5 82.8 L449.5 91.8 L450.5 91 L450.5 80.5 L451.5 79.4 L451.5 88.9 L452.5 90.5 L452.5 81.2 L453.5 83.8 L453.5 90.8 L454.5 92.2 L454.5 85.1 L455.5 86.5 L455.5 95 L456.5 97.3 L456.5 87.1 L457.5 87.3 L457.5 97.2 L458.5 97.4 L458.5 89.6 L459.5 89.5 L459.5 99 L460.5 100.9 L460.5 87.2 L461.5 95.2 L461.5 103.4 L462.5 103.2 L462.5 93.1 L463.5 95.9 L463.5 104.8 L464.5 108.3 L464.5 98 L465.5 97 L465.5 105.1 L466.5 104.5 L466.5 90.4 L467.5 97.5 L467.5 104.7 L468.5 106.7 L468.5 98.1 L469.5 100.7 L469.5 108.1 L470.5 112.8 L470.5 102.1 L471.5 100 L471.5 112.8 L472.5 109.9 L472.5 100.2 L473.5 99.1 L473.5 107.3 L474.5 104.5 L474.5 98 L475.5 95.1 L475.5 107 L476.5 107.4 L476.5 97.3 L477.5 97.7 L477.5 105.3 L478.5 103.1 L478.5 92.4 L479.5 95.7 L479.5 104.8 L480.5 99.8 L480.5 92.8 L481.5 86.3 L481.5 103.5 L482.5 98.2 L482.5 90.2 L483.5 91.9 L483.5 98 L484.5 98.8 L484.5 86.9 L485.5 91.7 L485.5 99.8 L486.5 97.2 L486.5 90.7 L487.5 87.9 L487.5 99.4 L488.5 97.4 L488.5 88.3 L489.5 83.7 L489.5 97.5 L490.5 99.2 L490.5 88.6 L491.5 89.8 L491.5 98.3 L492.5 98.1 L492.5 91.2 L493.5 86.8 L493.5 95 L494.5 94.8 L494.5 85.3 L495.5 84.1 L495.5 97.6 L496.5 92.2 L496.5 85.5 L497.5 83.1 L497.5 92.8 L498.5 95.7 L498.5 85.1 L499.5 86.4 L499.5 96.9 L500.5 98.4 L500.5 85.8 L501.5 87.7 L501.5 95.2 L502.5 88.9 L502.5 367.3 L503.5 357.6 L503.5 364.4 L504.5 362.2 L504.5 356.2 L505.5 355.7 L505.5 364.8 L506.5 364.4 L506.5 356.8 L507.5 354.1 L507.5 362.3 L508.5 360.1 L508.5 354.5 L509.5 351.3 L509.5 358.6 L510.5 357.9 L510.5 351.2 L511.5 350.7 L511.5 358.9 L512.5 357.9 L512.5 352.9 L513.5 352.8 L513.5 358.9 L514.5 358.7 L514.5 354 L515.5 358.2 L515.5 71.7 L516.5 95.4 L516.5 85.1 L517.5 86.4 L517.5 94.4 L518.5 99.1 L518.5 83.2 L519.5 91.3 L519.5 100.4 L520.5 101.2 L520.5 89.8 L521.5 92.9 L521.5 99.3 L522.5 101 L522.5 93.5 L523.5 87.6 L523.5 102.7 L524.5 97.1 L524.5 90 L525.5 90.1 L525.5 99.3 L526.5 101.3 L526.5 93.4 L527.5 89.5 L527.5 102.4 L528.5 105.9 L528.5 95.2 L529.5 95.8 L529.5 104.5 L530.5 102.2 L530.5 89.6 L531.5 90.1 L531.5 102.8 L532.5 99.9 L532.5 91.3 L533.5 94.7 L533.5 102 L534.5 104.6 L534.5 96.4 L535.5 95.9 L535.5 102.3 L536.5 103.8 L536.5 89.8 L537.5 92.3 L537.5 99.5 L538.5 99.6 L538.5 90.9 L539.5 89.9 L539.5 98.7 L540.5 98.6 L540.5 90.4 L541.5 88.9 L541.5 98.9 L542.5 92.8 L542.5 358.3 L543.5 349.9 L543.5 357.2 L544.5 358.7 L544.5 350.8 L545.5 351.3 L545.5 358.8 L546.5 356.6 L546.5 350.9 L547.5 350.8 L547.5 361.9 L548.5 356.7 L548.5 351.6 L549.5 351.4 L549.5 358 L550.5 358.1 L550.5 351 L551.5 349 L551.5 356.7 L552.5 354.4 L552.5 346.5 L553.5 349.3 L553.5 355.9 L554.5 354.3 L554.5 349.6 L555.5 349.1 L555.5 354.3 L556.5 356" stroke="#f6b044" stroke-width="1"/><path d="M300.5 353.6 L301.5 353.8 L301.5 350.7 L302.5 350.8 L302.5 354.3 L303.5 355.9 L303.5 351 L304.5 352.2 L304.5 355.7 L305.5 355.7 L305.5 351.7 L306.5 349.7 L306.5 352.7 L307.5 353.1 L307.5 348.7 L308.5 349.7 L308.5 353.1 L309.5 354 L309.5 349.7 L310.5 349.6 L310.5 354.3 L311.5 355.6 L311.5 350.6 L312.5 351.5 L312.5 355.6 L313.5 354.4 L313.5 350.9 L314.5 350.4 L314.5 354.4 M316.5 97.7 L316.5 93 L317.5 94.9 L317.5 99.7 L318.5 100.9 L318.5 95.4 L319.5 98 L319.5 102.2 L320.5 102.4 L320.5 98.2 L321.5 96.2 L321.5 101.2 L322.5 101 L322.5 96 L323.5 98.2 L323.5 103.5 L324.5 105.9 L324.5 102.6 L325.5 103.4 L325.5 108.1 L326.5 110 L326.5 105.5 L327.5 107.7 L327.5 111.6 M329.5 359.1 L329.5 364 L330.5 364.2 L330.5 360.3 L331.5 361 L331.5 364.7 L332.5 365.9 L332.5 363.2 L333.5 361.1 L333.5 365 L334.5 365.1 L334.5 360.9 L335.5 360.6 L335.5 363.9 L336.5 363.9 L336.5 360.2 L337.5 359.1 L337.5 362.7 L338.5 362.8 L338.5 359.2 L339.5 361.2 L339.5 365.5 L340.5 365.4 L340.5 361.7 M342.5 94.6 L342.5 89.9 L343.5 92.7 L343.5 97.4 L344.5 98.4 L344.5 93.8 L345.5 94.2 L345.5 99 L346.5 102.6 L346.5 98.3 L347.5 99.8 L347.5 104.6 L348.5 104.6 L348.5 101.8 L349.5 100.1 L349.5 104.1 L350.5 105.4 L350.5 100.9 L351.5 101 L351.5 106.2 L352.5 108.5 L352.5 102.7 L353.5 105.2 L353.5 108.6 L354.5 113.3 L354.5 108.5 M356.5 359 L356.5 362.8 L357.5 360.2 L357.5 357.1 L358.5 357.6 L358.5 360.5 L359.5 360.9 L359.5 357.6 L360.5 356 L360.5 359.6 L361.5 359.9 L361.5 356.3 L362.5 356.1 L362.5 359.5 L363.5 357.4 L363.5 353.5 L364.5 351.2 L364.5 353.7 L365.5 353.4 L365.5 348.9 L366.5 350.3 L366.5 353.8 L367.5 355.4 L367.5 352 L368.5 351.6 L368.5 355 L369.5 357.3 L369.5 352.7 L370.5 353.1 L370.5 357 L371.5 356.4 L371.5 352.3 L372.5 350.4 L372.5 354.5 L373.5 353.6 L373.5 349.8 L374.5 350.8 L374.5 354.2 L375.5 353.2 L375.5 350.8 L376.5 349.1 L376.5 351.9 L377.5 351.2 L377.5 347.1 L378.5 346.8 L378.5 349.8 L379.5 347.9 L379.5 343.2 L380.5 340.7 L380.5 345.6 L381.5 343.9 L381.5 341.6 L382.5 342.4 L382.5 346.7 L383.5 347 L383.5 344.6 L384.5 344.6 L384.5 347.8 L385.5 349.2 L385.5 345.6 L386.5 345.6 L386.5 349.9 L387.5 350 L387.5 347.3 L388.5 347.1 L388.5 350.7 L389.5 351.3 L389.5 347.8 L390.5 350.5 L390.5 352.9 L391.5 352.7 L391.5 349.9 L392.5 348.2 L392.5 351.3 L393.5 351.5 L393.5 347.6 L394.5 346.7 L394.5 350.6 M396.5 88.1 L396.5 82.3 L397.5 86.4 L397.5 90.7 L398.5 93.9 L398.5 89.2 L399.5 88.6 L399.5 93.8 L400.5 92.2 L400.5 87.2 L401.5 89 L401.5 94.8 L402.5 95.2 L402.5 91.4 L403.5 91.4 L403.5 96 L404.5 97.6 L404.5 93.4 L405.5 96.4 L405.5 100 L406.5 100.3 L406.5 95.5 L407.5 94.7 L407.5 99.2 M409.5 353.1 L409.5 357.7 L410.5 357 L410.5 354.2 L411.5 352.6 L411.5 356.5 L412.5 356.4 L412.5 353.8 L413.5 353.8 L413.5 357.6 L414.5 356.7 L414.5 352.9 L415.5 352.6 L415.5 356.4 L416.5 357.2 L416.5 353.1 L417.5 355 L417.5 359.5 L418.5 360.4 L418.5 356 L419.5 357.2 L419.5 360.7 L420.5 360.9 L420.5 356.6 L421.5 356.2 L421.5 359.6 L422.5 357.9 L422.5 353.4 L423.5 351 L423.5 354.8 L424.5 354.9 L424.5 351.9 L425.5 351.3 L425.5 355.6 L426.5 355.6 L426.5 351.6 L427.5 350.9 L427.5 355 L428.5 356.1 L428.5 352.6 L429.5 353.3 L429.5 357 L430.5 355.6 L430.5 352.5 L431.5 352.3 L431.5 356.1 L432.5 358 L432.5 354.4 L433.5 356.1 L433.5 359.7 L434.5 359.5 L434.5 356 M436.5 95.6 L436.5 91.2 L437.5 89.4 L437.5 95.1 L438.5 92.3 L438.5 87.8 L439.5 87.2 L439.5 92.4 L440.5 93.2 L440.5 89.1 L441.5 88.8 L441.5 93.6 L442.5 92.4 L442.5 87.7 L443.5 86.7 L443.5 92.1 L444.5 92.1 L444.5 85.8 L445.5 85.4 L445.5 91.2 L446.5 90.3 L446.5 84.3 L447.5 86.5 L447.5 90.1 L448.5 92.7 L448.5 87.8 L449.5 85.3 L449.5 91.1 L450.5 89.1 L450.5 82.9 L451.5 82.7 L451.5 87.9 L452.5 89 L452.5 83.3 L453.5 85.6 L453.5 89.7 L454.5 90.6 L454.5 86.5 L455.5 87.5 L455.5 92.1 L456.5 96 L456.5 90.7 L457.5 91.2 L457.5 96.7 L458.5 94.2 L458.5 90 L459.5 90.8 L459.5 96.1 L460.5 99.9 L460.5 94.3 L461.5 95.6 L461.5 100.3 L462.5 101.9 L462.5 97.1 L463.5 99.1 L463.5 103.6 L464.5 105.4 L464.5 100.3 L465.5 98.9 L465.5 103.3 L466.5 101.7 L466.5 96.7 L467.5 98.6 L467.5 103.8 L468.5 106.8 L468.5 100.8 L469.5 103.1 L469.5 106.5 L470.5 108.1 L470.5 102.8 L471.5 103.1 L471.5 108.3 L472.5 107.6 L472.5 102.3 L473.5 100.1 L473.5 105.4 L474.5 104.1 L474.5 99.7 L475.5 100.1 L475.5 105.3 L476.5 105 L476.5 101.1 L477.5 99.4 L477.5 104.4 L478.5 101.5 L478.5 97.5 L479.5 96.4 L479.5 102.2 L480.5 99.4 L480.5 94.6 L481.5 91.7 L481.5 96.2 L482.5 95.1 L482.5 91.6 L483.5 92.2 L483.5 96.6 L484.5 97.3 L484.5 92.5 L485.5 92.8 L485.5 97.6 L486.5 96.9 L486.5 91.1 L487.5 92.6 L487.5 96.8 L488.5 95.3 L488.5 90.1 L489.5 91 L489.5 93.8 L490.5 95.4 L490.5 91.8 L491.5 91.9 L491.5 97.4 L492.5 96.6 L492.5 91.7 L493.5 88.7 L493.5 93.8 L494.5 92.2 L494.5 87.8 L495.5 86.7 L495.5 92.2 L496.5 91.9 L496.5 85.7 L497.5 86.5 L497.5 92.4 L498.5 93.4 L498.5 89.1 L499.5 90.3 L499.5 95.7 L500.5 94 L500.5 90.7 L501.5 88.7 L501.5 94.3 M503.5 357.6 L503.5 362.2 L504.5 361.8 L504.5 357.2 L505.5 357.9 L505.5 360.6 L506.5 362.3 L506.5 358.7 L507.5 357.8 L507.5 361.8 L508.5 359.7 L508.5 356.1 L509.5 354.3 L509.5 357.8 L510.5 357.7 L510.5 353.4 L511.5 353.9 L511.5 357.6 L512.5 357.5 L512.5 354.1 L513.5 354 L513.5 357.4 L514.5 358 L514.5 353.9 M516.5 92.4 L516.5 88.1 L517.5 88.7 L517.5 91.6 L518.5 95.2 L518.5 90.3 L519.5 92.5 L519.5 98.1 L520.5 97.2 L520.5 92 L521.5 94.2 L521.5 97.5 L522.5 98.9 L522.5 93.5 L523.5 94 L523.5 98.2 L524.5 95.8 L524.5 90.5 L525.5 91.2 L525.5 97.3 L526.5 100.6 L526.5 95.5 L527.5 97.5 L527.5 100.9 L528.5 102 L528.5 95.7 L529.5 96.1 L529.5 101.6 L530.5 102 L530.5 97.4 L531.5 95.9 L531.5 100.5 L532.5 98.7 L532.5 94.7 L533.5 96.2 L533.5 99.8 L534.5 102.5 L534.5 98.3 L535.5 96 L535.5 101.1 L536.5 99.1 L536.5 94.2 L537.5 93.1 L537.5 99.4 L538.5 98.6 L538.5 93.5 L539.5 92.3 L539.5 95.8 L540.5 95.2 L540.5 91 L541.5 93.2 L541.5 97.1 M543.5 353.1 L543.5 356.2 L544.5 356 L544.5 352.3 L545.5 351.6 L545.5 355 L546.5 355.3 L546.5 352.5 L547.5 351.1 L547.5 356.1 L548.5 355.1 L548.5 351.6 L549.5 352.7 L549.5 356.3 L550.5 356.4 L550.5 354.1 L551.5 352.2 L551.5 355.2 L552.5 353.1 L552.5 350 L553.5 349.7 L553.5 353.1 L554.5 353.7 L554.5 349.9 L555.5 349.8 L555.5 353.8" stroke="#ffda3c" stroke-width="1.2"/>
<path d="M555.5 354.3 L556.5 356 L556.5 62.5 L557.5 94.8 L557.5 87 L558.5 87.6 L558.5 96.7 L559.5 96 L559.5 86.1 L560.5 86.5 L560.5 96.6 L561.5 94.4 L561.5 87.5 L562.5 88.8 L562.5 95.8 L563.5 96.1 L563.5 87.8 L564.5 87.5 L564.5 98.5 L565.5 97.7 L565.5 88.7 L566.5 87.2 L566.5 101.9 L567.5 97.2 L567.5 88.6 L568.5 91.1 L568.5 97.9 L569.5 101.1 L569.5 92.1 L570.5 96.7 L570.5 103.1 L571.5 105.8 L571.5 96.5 L572.5 97.1 L572.5 105.4 L573.5 107 L573.5 99.2 L574.5 99.6 L574.5 107.3 L575.5 107.8 L575.5 98 L576.5 96.3 L576.5 107.9 L577.5 109.4 L577.5 101.2 L578.5 101.2 L578.5 108.3 L579.5 109 L579.5 93.7 L580.5 96 L580.5 105.3 L581.5 104.3 L581.5 93.1 L582.5 95.2 L582.5 103.3 L583.5 102.4 L583.5 95.1 L584.5 96.7 L584.5 109.9 L585.5 111.6 L585.5 98.3 L586.5 101.9 L586.5 110.4 L587.5 110.3 L587.5 98.3 L588.5 103 L588.5 115.1 L589.5 111 L589.5 103 L590.5 102.8 L590.5 110.6 L591.5 110 L591.5 103.5 L592.5 104 L592.5 111.5 L593.5 113.3 L593.5 102.9 L594.5 99.3 L594.5 107.5 L595.5 106 L595.5 97 L596.5 96.9" stroke="#a8e498" stroke-width="1"/><path d="M557.5 94.3 L557.5 89.9 L558.5 90 L558.5 94.5 L559.5 92.2 L559.5 86.7 L560.5 87.1 L560.5 92.6 L561.5 93.2 L561.5 88 L562.5 89.5 L562.5 93.5 L563.5 93.7 L563.5 89.6 L564.5 89.5 L564.5 94.7 L565.5 95.4 L565.5 90.9 L566.5 91.3 L566.5 96.1 L567.5 96.2 L567.5 91.5 L568.5 93 L568.5 96.5 L569.5 100.8 L569.5 96.4 L570.5 97.4 L570.5 102.6 L571.5 103.9 L571.5 99.2 L572.5 100.6 L572.5 104.7 L573.5 105.6 L573.5 101.8 L574.5 99.7 L574.5 104.5 L575.5 105.5 L575.5 100.7 L576.5 101.8 L576.5 107.1 L577.5 108.5 L577.5 102.2 L578.5 102.8 L578.5 107.2 L579.5 106.3 L579.5 100 L580.5 99.8 L580.5 105.5 L581.5 103.4 L581.5 98.5 L582.5 97.4 L582.5 101.2 L583.5 102.7 L583.5 97.6 L584.5 99.6 L584.5 105.3 L585.5 107.6 L585.5 103.5 L586.5 103.5 L586.5 107.9 L587.5 108.1 L587.5 103.8 L588.5 105 L588.5 109 L589.5 111.1 L589.5 105.2 L590.5 104.7 L590.5 109.5 L591.5 108.8 L591.5 105.1 L592.5 106 L592.5 109.5 L593.5 109.8 L593.5 104.6 L594.5 101.3 L594.5 106.4 L595.5 103.4 L595.5 99 L596.5 98" stroke="#d8f65c" stroke-width="1.2"/>
<path d="M595.5 97 L596.5 96.9 L596.5 103.8 L597.5 102.7 L597.5 95.1 L598.5 95.4 L598.5 103.2 L599.5 103.5 L599.5 90.4 L600.5 98.6 L600.5 108.2 L601.5 105.4 L601.5 97.6 L602.5 96 L602.5 107.8 L603.5 102.5 L603.5 95 L604.5 93.3 L604.5 105.5 L605.5 105 L605.5 94.3 L606.5 94.2 L606.5 106.5 L607.5 105.5 L607.5 97 L608.5 91.7 L608.5 104.7 L609.5 102.6 L609.5 91.5 L610.5 91.1 L610.5 100.3 L611.5 98.3 L611.5 90.1 L612.5 89.1 L612.5 99.5 L613.5 98.7 L613.5 91.9 L614.5 92.4 L614.5 102.9 L615.5 105.1 L615.5 90.6 L616.5 89.8 L616.5 99.9 L617.5 102.4 L617.5 90.9 L618.5 84.2 L618.5 98 L619.5 98.6 L619.5 91 L620.5 88.3 L620.5 101.2 L621.5 99.8 L621.5 92.1 L622.5 88.7 L622.5 103.9 L623.5 91 L623.5 365.2 L624.5 349.9 L624.5 362 L625.5 360.2 L625.5 355 L626.5 353.9 L626.5 359.4 L627.5 366.7 L627.5 354.1 L628.5 357.3 L628.5 362.5 L629.5 362.2 L629.5 357.2 L630.5 356.9 L630.5 368.5 L631.5 364.5 L631.5 357.3 L632.5 357.7 L632.5 362.7 L633.5 361.8 L633.5 355.6 L634.5 357.3 L634.5 363.5 L635.5 364.6 L635.5 358.3 L636.5 357.8 L636.5 364.3 L637.5 365 L637.5 357.3 L638.5 357.1 L638.5 361.7 L639.5 361.8 L639.5 355.2 L640.5 355.7 L640.5 363.3 L641.5 360.3 L641.5 354.4 L642.5 355.2 L642.5 364.9 L643.5 362.5 L643.5 357.6 L644.5 357.4 L644.5 365.3 L645.5 365.4 L645.5 355.6 L646.5 356.3 L646.5 361.8 L647.5 364.3 L647.5 356.6 L648.5 356.6 L648.5 361.7 L649.5 362 L649.5 64.5 L650.5 100.7 L650.5 92.7 L651.5 93.5 L651.5 101.2 L652.5 99.3 L652.5 89.6 L653.5 89.7 L653.5 96.8 L654.5 96.4 L654.5 89.4 L655.5 90.3 L655.5 99.9 L656.5 99.8 L656.5 87.9 L657.5 89.7 L657.5 98.7 L658.5 101.1 L658.5 88.8 L659.5 94.5 L659.5 102.8 L660.5 100.1 L660.5 91.8 L661.5 92.1 L661.5 102 L662.5 100.5 L662.5 92.6 L663.5 93.7" stroke="#b4ec4c" stroke-width="1"/><path d="M595.5 99 L596.5 98 L596.5 102.6 L597.5 102.8 L597.5 97.5 L598.5 96.5 L598.5 100.8 L599.5 101.6 L599.5 97 L600.5 99.5 L600.5 103.3 L601.5 103 L601.5 98.5 L602.5 96.5 L602.5 101.1 L603.5 101.4 L603.5 96 L604.5 97.1 L604.5 102.4 L605.5 102.6 L605.5 97.3 L606.5 97.7 L606.5 102.5 L607.5 102.5 L607.5 97.5 L608.5 98.1 L608.5 103.3 L609.5 100.3 L609.5 95.9 L610.5 93.1 L610.5 97.3 L611.5 97.5 L611.5 92.5 L612.5 93.1 L612.5 97.1 L613.5 98 L613.5 92.9 L614.5 93.5 L614.5 98.6 L615.5 98.9 L615.5 94.9 L616.5 95.4 L616.5 99.4 L617.5 97.6 L617.5 92.1 L618.5 91.3 L618.5 96.5 L619.5 97 L619.5 92.3 L620.5 93.8 L620.5 97.9 L621.5 98.5 L621.5 93.4 L622.5 92.9 L622.5 97.6 M624.5 357.4 L624.5 361.5 L625.5 359.8 L625.5 355 L626.5 354.6 L626.5 359.1 L627.5 360.2 L627.5 356.1 L628.5 358 L628.5 361.6 L629.5 361.7 L629.5 357.7 L630.5 357.7 L630.5 360.8 L631.5 362.3 L631.5 358.7 L632.5 357.6 L632.5 361.9 L633.5 361.1 L633.5 357.4 L634.5 358.1 L634.5 362.5 L635.5 362.9 L635.5 360.4 L636.5 360.7 L636.5 363.2 L637.5 362.8 L637.5 358.6 L638.5 357.3 L638.5 361 L639.5 360.5 L639.5 357.7 L640.5 356.2 L640.5 359.7 L641.5 359.8 L641.5 356.3 L642.5 356.8 L642.5 360.5 L643.5 362.5 L643.5 357.7 L644.5 357.9 L644.5 361.6 L645.5 361.5 L645.5 357.2 L646.5 356.7 L646.5 360.3 L647.5 361.6 L647.5 357.6 L648.5 357.6 L648.5 360.5 M650.5 98.8 L650.5 94.7 L651.5 95.8 L651.5 99 L652.5 97.4 L652.5 93.7 L653.5 91.8 L653.5 96 L654.5 94.7 L654.5 90.3 L655.5 92.2 L655.5 96.1 L656.5 96.1 L656.5 92.3 L657.5 91.5 L657.5 96.7 L658.5 99.2 L658.5 95.1 L659.5 95.8 L659.5 100.9 L660.5 98.9 L660.5 94.4 L661.5 93.9 L661.5 97.9 L662.5 99.1 L662.5 94 L663.5 96.5" stroke="#dcf83c" stroke-width="1.2"/>
<path d="M662.5 92.6 L663.5 93.7 L663.5 103 L664.5 102.2 L664.5 95.7 L665.5 94.4 L665.5 102.4 L666.5 103.6 L666.5 95.8 L667.5 95.5 L667.5 102.2 L668.5 103.6 L668.5 92.6 L669.5 89.6 L669.5 99.2 L670.5 102.7 L670.5 92.9 L671.5 94.6 L671.5 104.5 L672.5 104.4 L672.5 96 L673.5 93.4 L673.5 105.8 L674.5 104.9 L674.5 98.5 L675.5 97.2 L675.5 104.1 L676.5 98 L676.5 363.7 L677.5 354.6 L677.5 362.5 L678.5 364.1 L678.5 357.4 L679.5 355.8 L679.5 364.5 L680.5 362.4 L680.5 354.3 L681.5 355.5 L681.5 362.2 L682.5 359.4 L682.5 353 L683.5 351.3 L683.5 359.8 L684.5 357 L684.5 348.1 L685.5 350.8 L685.5 359.3 L686.5 359.8 L686.5 353.7 L687.5 350.1 L687.5 358.1 L688.5 358.9 L688.5 350.8 L689.5 357.2 L689.5 70.4 L690.5 105 L690.5 95.9 L691.5 96.8 L691.5 104.5 L692.5 106.4 L692.5 98.1 L693.5 100.3 L693.5 108 L694.5 109 L694.5 101.6 L695.5 99.7 L695.5 107.8 L696.5 105.8 L696.5 97 L697.5 98.4 L697.5 108 L698.5 106.7 L698.5 99.3 L699.5 99.4 L699.5 106.3 L700.5 108 L700.5 101.1 L701.5 103.7 L701.5 110.2 L702.5 111.4 L702.5 102.9 L703.5 103.7 L703.5 362.8 L704.5 353.8 L704.5 359.3 L705.5 359.1 L705.5 353.6 L706.5 353.9 L706.5 363.1 L707.5 359.7 L707.5 354.7 L708.5 353.2 L708.5 360.4 L709.5 363.9 L709.5 353.7 L710.5 352.7 L710.5 361.2 L711.5 357.7 L711.5 350.5 L712.5 351.4 L712.5 358.7 L713.5 358.5 L713.5 351.7 L714.5 350.3 L714.5 361.5 L715.5 358.3 L715.5 353.1 L716.5 359.1 L716.5 74 L717.5 105.1 L717.5 97.8 L718.5 96.8 L718.5 103.9 L719.5 104.4 L719.5 95.3 L720.5 95.1 L720.5 102.6 L721.5 104.6 L721.5 96.9 L722.5 95.2 L722.5 108.1 L723.5 104.7 L723.5 96.3 L724.5 96.7 L724.5 103.6 L725.5 105.4 L725.5 91.9 L726.5 92 L726.5 102.5 L727.5 98.7 L727.5 90.5 L728.5 92.4 L728.5 101.2 L729.5 101.4 L729.5 91.7 L730.5 95.3 L730.5 363.2 L731.5 355.6 L731.5 361.6 L732.5 361.6 L732.5 355.4 L733.5 355.9 L733.5 360.8 L734.5 362.3 L734.5 355.1 L735.5 354.5 L735.5 360.3 L736.5 362.7 L736.5 356.8 L737.5 356.8 L737.5 362.5 L738.5 363.8 L738.5 356.1 L739.5 353.7 L739.5 360.1 L740.5 361.8 L740.5 354.9 L741.5 350.4 L741.5 360.1 L742.5 358.3 L742.5 351.8 L743.5 360.7 L743.5 88.4 L744.5 109 L744.5 101.1 L745.5 101.6 L745.5 112.3 L746.5 110.7 L746.5 99.1 L747.5 96.8 L747.5 105.9 L748.5 105.4 L748.5 96.3 L749.5 93.8 L749.5 107 L750.5 105.3 L750.5 97.8 L751.5 94.1 L751.5 106.4 L752.5 108.1 L752.5 98 L753.5 96.9 L753.5 103.1 L754.5 100 L754.5 92.1 L755.5 91.5 L755.5 101.3 L756.5 93.4 L756.5 357.3 L757.5 343.2 L757.5 351.5 L758.5 354.9 L758.5 346.9 L759.5 349.3 L759.5 356.3 L760.5 355.7 L760.5 350.2 L761.5 348.1 L761.5 356.4 L762.5 357.3 L762.5 349.6 L763.5 350.4 L763.5 355.7 L764.5 357.1 L764.5 351.4 L765.5 351.8 L765.5 356.9 L766.5 357 L766.5 352.3 L767.5 352.3 L767.5 358.1 L768.5 360.8 L768.5 351.3 L769.5 349.4 L769.5 356.9 L770.5 355 L770.5 347.9 L771.5 347.7 L771.5 356.9 L772.5 356.9 L772.5 350.1 L773.5 349 L773.5 355.4 L774.5 355 L774.5 349.9 L775.5 349.9 L775.5 355.9 L776.5 356 L776.5 350.7 L777.5 350.2 L777.5 356.2 L778.5 356.5 L778.5 351.7 L779.5 352.6 L779.5 359.8 L780.5 361.5 L780.5 352.6 L781.5 354.6 L781.5 365.8 L782.5 362.7 L782.5 354.9 L783.5 360.8 L783.5 67.3 L784.5 98.1 L784.5 91 L785.5 89.7 L785.5 98.3 L786.5 98.8 L786.5 90.8 L787.5 93.4 L787.5 102 L788.5 103.3 L788.5 94.4 L789.5 93.3 L789.5 99.9 L790.5 103.7 L790.5 91.6 L791.5 91.6 L791.5 101.7 L792.5 99.8 L792.5 93 L793.5 91.9 L793.5 100.3 L794.5 102.3 L794.5 94.7 L795.5 95.4 L795.5 109.3 L796.5 94 L796.5 359.8 L797.5 349.6 L797.5 354.8 L798.5 354 L798.5 347.5 L799.5 348.4 L799.5 355 L800.5 354 L800.5 347.8 L801.5 347.6 L801.5 355.5 L802.5 359.9 L802.5 348.7 L803.5 350.5 L803.5 359.6 L804.5 356.3 L804.5 349.6 L805.5 343.5 L805.5 354.2 L806.5 354.5 L806.5 349.8 L807.5 349.6 L807.5 355.4 L808.5 355.4 L808.5 350.4 L809.5 350.5 L809.5 355.3 L810.5 355.1 L810.5 64.5 L811.5 101 L811.5 92.1 L812.5 89.9 L812.5 97.7 L813.5 96 L813.5 87.6 L814.5 87.9 L814.5 97.4 L815.5 103.9 L815.5 88.7 L816.5 93.2 L816.5 100.2 L817.5 103.2 L817.5 94.4 L818.5 90 L818.5 102.9 L819.5 105.9 L819.5 93 L820.5 92.3 L820.5 101.8 L821.5 102.3 L821.5 92.2 L822.5 97.5 L822.5 106 L823.5 97.8 L823.5 362.3 L824.5 353.3 L824.5 360.3 L825.5 364.8 L825.5 351.1 L826.5 353.2 L826.5 362.5 L827.5 358.2 L827.5 351.8 L828.5 349.3 L828.5 355.4 L829.5 358.7 L829.5 349.9 L830.5 352.9 L830.5 359.8 L831.5 358.7 L831.5 352.9 L832.5 353.4 L832.5 363.9 L833.5 359 L833.5 353.5 L834.5 353.7 L834.5 359.9 L835.5 358.1 L835.5 352.5 L836.5 350.1 L836.5 358.3 L837.5 359.1 L837.5 72.5 L838.5 107.4 L838.5 98.7 L839.5 99.8 L839.5 106 L840.5 104.6 L840.5 96.4 L841.5 95.2 L841.5 104.3 L842.5 106.1 L842.5 90 L843.5 94.9 L843.5 102.5 L844.5 102.8 L844.5 95.1 L845.5 98.2 L845.5 105.8 L846.5 106.3 L846.5 97.9 L847.5 98.2 L847.5 107.5 L848.5 105.3 L848.5 97.2 L849.5 96.5 L849.5 104.5 L850.5 98 L850.5 364.7 L851.5 353.6 L851.5 361.5 L852.5 362.4 L852.5 356.3 L853.5 356.1 L853.5 362.8 L854.5 362.2 L854.5 355.8 L855.5 354.8 L855.5 360.8 L856.5 360.1 L856.5 353.1 L857.5 354 L857.5 359 L858.5 360.2 L858.5 353.8 L859.5 354.6 L859.5 361.6 L860.5 363.1 L860.5 353.5 L861.5 356.2 L861.5 363.6 L862.5 361.2 L862.5 356.1 L863.5 361 L863.5 72.6 L864.5 103.2 L864.5 94.9 L865.5 91.3 L865.5 105.8 L866.5 106.8 L866.5 95.7 L867.5 97.1 L867.5 105.1 L868.5 104.7 L868.5 97.1 L869.5 95.9 L869.5 103.5 L870.5 101.6 L870.5 94.4 L871.5 92.6 L871.5 100.5 L872.5 102 L872.5 92.4 L873.5 95.1 L873.5 102.1 L874.5 102.4 L874.5 95 L875.5 94.5 L875.5 102 L876.5 107.7 L876.5 95.3 L877.5 94.3" stroke="#a8e498" stroke-width="1"/><path d="M662.5 94 L663.5 96.5 L663.5 100.7 L664.5 100.9 L664.5 95.7 L665.5 96.7 L665.5 101.4 L666.5 102 L666.5 98.4 L667.5 96.1 L667.5 100.9 L668.5 99.7 L668.5 93.6 L669.5 94 L669.5 97.4 L670.5 100.1 L670.5 95.8 L671.5 97.5 L671.5 102.5 L672.5 101.4 L672.5 98 L673.5 97.7 L673.5 102 L674.5 103.6 L674.5 99.8 L675.5 99 L675.5 103.7 M677.5 357.1 L677.5 360.6 L678.5 361.5 L678.5 358.8 L679.5 358.8 L679.5 361.4 L680.5 360.4 L680.5 357.8 L681.5 356.6 L681.5 360.4 L682.5 358.7 L682.5 354.9 L683.5 353.8 L683.5 356.5 L684.5 356.1 L684.5 351.6 L685.5 352.8 L685.5 356.5 L686.5 357.9 L686.5 354.4 L687.5 353.5 L687.5 356.8 L688.5 356.4 L688.5 353.1 M690.5 102.1 L690.5 98.7 L691.5 98.8 L691.5 102.6 L692.5 103.2 L692.5 98.6 L693.5 101.5 L693.5 107.1 L694.5 107 L694.5 102.2 L695.5 101.1 L695.5 106.6 L696.5 105.1 L696.5 99.7 L697.5 99.4 L697.5 104.1 L698.5 104.4 L698.5 101.1 L699.5 100.1 L699.5 105.2 L700.5 106.4 L700.5 102 L701.5 105.6 L701.5 110.4 L702.5 111.6 L702.5 105.4 M704.5 354.5 L704.5 357.5 L705.5 358.9 L705.5 354.4 L706.5 355.4 L706.5 358.8 L707.5 359.5 L707.5 356.2 L708.5 356.4 L708.5 359.7 L709.5 360.5 L709.5 357 L710.5 355.7 L710.5 358.5 L711.5 356.9 L711.5 353.4 L712.5 352.8 L712.5 355.3 L713.5 357.1 L713.5 352.7 L714.5 353.7 L714.5 357.3 L715.5 356.7 L715.5 353.6 M717.5 102.7 L717.5 97.8 L718.5 98.1 L718.5 102.8 L719.5 101.3 L719.5 95.2 L720.5 96.3 L720.5 101.4 L721.5 103.6 L721.5 98.6 L722.5 99.4 L722.5 103.1 L723.5 102 L723.5 98.2 L724.5 97.6 L724.5 103.2 L725.5 102.3 L725.5 95.7 L726.5 95.1 L726.5 99.4 L727.5 98.4 L727.5 92.6 L728.5 94.5 L728.5 98.6 L729.5 101.1 L729.5 96.6 M731.5 356.4 L731.5 359.9 L732.5 360 L732.5 356.4 L733.5 355.9 L733.5 360.2 L734.5 358.7 L734.5 356.1 L735.5 355.9 L735.5 359.6 L736.5 361.2 L736.5 358.1 L737.5 358.5 L737.5 361.3 L738.5 361.2 L738.5 357.2 L739.5 355.2 L739.5 359.9 L740.5 358.6 L740.5 355.7 L741.5 354.5 L741.5 358 L742.5 357.6 L742.5 354.6 M744.5 108.4 L744.5 103.6 L745.5 102.9 L745.5 108.7 L746.5 105.2 L746.5 100.4 L747.5 99.2 L747.5 104.9 L748.5 105.1 L748.5 100.1 L749.5 100.3 L749.5 104.4 L750.5 102.6 L750.5 98 L751.5 99.6 L751.5 103.2 L752.5 103.6 L752.5 99.4 L753.5 96.9 L753.5 101.7 L754.5 98.6 L754.5 93.7 L755.5 92.3 L755.5 97.5 M757.5 347.7 L757.5 350.5 L758.5 351.1 L758.5 347.8 L759.5 349.8 L759.5 353.5 L760.5 354.9 L760.5 350.9 L761.5 351.8 L761.5 354.5 L762.5 353.3 L762.5 350.2 L763.5 351.1 L763.5 354.8 L764.5 356.2 L764.5 353.2 L765.5 352.9 L765.5 357.1 L766.5 356 L766.5 352.5 L767.5 353.5 L767.5 356.9 L768.5 355.6 L768.5 352 L769.5 350.4 L769.5 354.9 L770.5 352.9 L770.5 349.8 L771.5 349.5 L771.5 354.1 L772.5 354.7 L772.5 350.7 L773.5 350.7 L773.5 354.2 L774.5 354.8 L774.5 350.7 L775.5 351.6 L775.5 354.4 L776.5 355.9 L776.5 352.5 L777.5 351.3 L777.5 354.7 L778.5 355.7 L778.5 352.6 L779.5 354.1 L779.5 358.1 L780.5 359.4 L780.5 356.9 L781.5 356.4 L781.5 360.2 L782.5 359.7 L782.5 356.7 M784.5 96.3 L784.5 93.1 L785.5 91.4 L785.5 95.4 L786.5 96.9 L786.5 91.1 L787.5 93.4 L787.5 99.3 L788.5 99.6 L788.5 94.3 L789.5 94 L789.5 99.7 L790.5 98.4 L790.5 94.5 L791.5 94.7 L791.5 99.7 L792.5 98.2 L792.5 94.5 L793.5 94.2 L793.5 99.2 L794.5 101.5 L794.5 96.8 L795.5 98.3 L795.5 102.5 M797.5 351.1 L797.5 353.6 L798.5 353.3 L798.5 349.3 L799.5 349.7 L799.5 353.6 L800.5 352.7 L800.5 349.1 L801.5 349.2 L801.5 352.9 L802.5 354.3 L802.5 351.1 L803.5 352.5 L803.5 354.8 L804.5 354.3 L804.5 350.5 L805.5 349.4 L805.5 352.8 L806.5 353.8 L806.5 350.9 L807.5 350.4 L807.5 354.5 L808.5 355.3 L808.5 350.7 L809.5 350.8 L809.5 354.4 M811.5 99.3 L811.5 94.2 L812.5 90.8 L812.5 95.6 L813.5 95.1 L813.5 90.2 L814.5 91.8 L814.5 96.5 L815.5 97.8 L815.5 93.3 L816.5 94.4 L816.5 98.5 L817.5 99.8 L817.5 95.1 L818.5 96.9 L818.5 101.2 L819.5 102.3 L819.5 97.5 L820.5 96.2 L820.5 100.6 L821.5 101.6 L821.5 96.2 L822.5 98.4 L822.5 103.4 M824.5 353.8 L824.5 357.5 L825.5 356.9 L825.5 354.4 L826.5 354.5 L826.5 358 L827.5 355.6 L827.5 353.1 L828.5 351.4 L828.5 355.4 L829.5 354.8 L829.5 351.2 L830.5 353.4 L830.5 356.6 L831.5 357.3 L831.5 354.4 L832.5 354.2 L832.5 358.1 L833.5 357.6 L833.5 354.6 L834.5 354.9 L834.5 358.4 L835.5 357.5 L835.5 354.1 L836.5 354.2 L836.5 358 M838.5 105.8 L838.5 102.1 L839.5 100.5 L839.5 105.1 L840.5 103.6 L840.5 99.4 L841.5 97.5 L841.5 102.8 L842.5 101.7 L842.5 96.7 L843.5 95.2 L843.5 100.7 L844.5 102.3 L844.5 97.2 L845.5 97.9 L845.5 103.1 L846.5 104.3 L846.5 100.6 L847.5 98.4 L847.5 104.6 L848.5 103 L848.5 98.2 L849.5 97.5 L849.5 102.3 M851.5 356.4 L851.5 360.9 L852.5 360.5 L852.5 356.7 L853.5 358.1 L853.5 361.9 L854.5 361.3 L854.5 357.5 L855.5 355.9 L855.5 359.8 L856.5 357.9 L856.5 354.3 L857.5 354.2 L857.5 358.4 L858.5 358.4 L858.5 354.8 L859.5 355.4 L859.5 359.1 L860.5 359.1 L860.5 355.7 L861.5 356.8 L861.5 360.3 L862.5 360.2 L862.5 357.4 M864.5 101.3 L864.5 97.6 L865.5 98.5 L865.5 103.2 L866.5 104.1 L866.5 99.7 L867.5 99 L867.5 103 L868.5 102.6 L868.5 99.4 L869.5 98.6 L869.5 103.2 L870.5 101 L870.5 96.1 L871.5 92.6 L871.5 97.6 L872.5 98.5 L872.5 93.7 L873.5 96 L873.5 101 L874.5 101.6 L874.5 95.8 L875.5 95.7 L875.5 101.5 L876.5 100.8 L876.5 95.9 L877.5 97.6" stroke="#d8f65c" stroke-width="1.2"/>
<path d="M876.5 95.3 L877.5 94.3 L877.5 102.9 L878.5 103 L878.5 95 L879.5 93.8 L879.5 102.3 L880.5 108.2 L880.5 98 L881.5 97.8 L881.5 108.5 L882.5 109.5 L882.5 98.7 L883.5 100.9 L883.5 108.9 L884.5 107.4 L884.5 98.7 L885.5 98.2 L885.5 107.2 L886.5 106.4 L886.5 98.9 L887.5 100.3 L887.5 107.6 L888.5 117.2 L888.5 103.2 L889.5 106.6 L889.5 113.5 L890.5 112.4 L890.5 99.3 L891.5 103.6 L891.5 113.4 L892.5 109.7 L892.5 102.7 L893.5 100 L893.5 112 L894.5 108.7 L894.5 101.3 L895.5 100.3 L895.5 109 L896.5 112.8 L896.5 102.1 L897.5 100.8 L897.5 108.8 L898.5 104.9 L898.5 97.7 L899.5 94.3 L899.5 105.2 L900.5 103.1 L900.5 91.4 L901.5 94.5 L901.5 103.2 L902.5 102.7 L902.5 95.1 L903.5 95.3 L903.5 105.4 L904.5 104.9 L904.5 96.4 L905.5 97.2 L905.5 107.7 L906.5 104.3 L906.5 95.5 L907.5 93.9 L907.5 102.3 L908.5 103.2 L908.5 96.8 L909.5 94.4 L909.5 104 L910.5 104.7 L910.5 96.7 L911.5 97.4 L911.5 107.1 L912.5 104.5 L912.5 91.1 L913.5 93.1 L913.5 101.2 L914.5 100.4 L914.5 91.2 L915.5 92.1 L915.5 101.3 L916.5 104.3 L916.5 87 L917.5 92.8 L917.5 101.8 L918.5 100.5 L918.5 93.2 L919.5 92.8 L919.5 100.3 L920.5 102.9 L920.5 89.9 L921.5 91.6 L921.5 99.2 L922.5 98.5 L922.5 85.8 L923.5 91.1 L923.5 98.6 L924.5 99.7 L924.5 90.5 L925.5 91.9 L925.5 99.4 L926.5 96.6 L926.5 89.5 L927.5 87.7 L927.5 95.7 L928.5 95.1 L928.5 86.5 L929.5 79.7 L929.5 91.2 L930.5 86.9 L930.5 359.3 L931.5 350.8 L931.5 355.7 L932.5 357.2 L932.5 350.8 L933.5 350.7 L933.5 356.4 L934.5 355.6 L934.5 350.2 L935.5 350.2 L935.5 357.6 L936.5 358.1 L936.5 349.9 L937.5 348.1 L937.5 355.1 L938.5 354.8 L938.5 349.7 L939.5 350.2 L939.5 356 L940.5 355.4 L940.5 349.4 L941.5 347 L941.5 353.1 L942.5 351.9 L942.5 342.2 L943.5 344.7 L943.5 351.9 L944.5 353.2 L944.5 57.5 L945.5 93 L945.5 82.2 L946.5 85 L946.5 91.6 L947.5 94.7 L947.5 87.7 L948.5 87.9 L948.5 95 L949.5 94.9 L949.5 85.2 L950.5 85 L950.5 97.4 L951.5 100.2 L951.5 89.4 L952.5 89.9 L952.5 98.8 L953.5 101.7 L953.5 91.5 L954.5 91.1 L954.5 105.8 L955.5 104.3 L955.5 94 L956.5 92.7 L956.5 104.8 L957.5 95.8 L957.5 360.9 L958.5 348.2 L958.5 356.5 L959.5 359.9 L959.5 352.7 L960.5 352.9 L960.5 358.5 L961.5 360.8 L961.5 353.3 L962.5 354.4 L962.5 362.3 L963.5 361.5 L963.5 356.2 L964.5 355.5 L964.5 361.7 L965.5 361.3 L965.5 356 L966.5 355.3 L966.5 362.6 L967.5 363.3 L967.5 358 L968.5 357.2 L968.5 363.4 L969.5 363.7 L969.5 356.9 L970.5 358.3 L970.5 364.5 L971.5 362.2 L971.5 357.1 L972.5 355.1 L972.5 362.7 L973.5 360.4 L973.5 354.4 L974.5 350.5 L974.5 360.9 L975.5 361 L975.5 355.6 L976.5 355.1 L976.5 362.5 L977.5 361.2 L977.5 355.6 L978.5 355 L978.5 363.5 L979.5 360.3 L979.5 354.4 L980.5 352.9 L980.5 359.4 L981.5 360.1 L981.5 353.2 L982.5 354.7 L982.5 364.6 L983.5 360.2 L983.5 353.2 L984.5 357.9 L984.5 61.8 L985.5 96.2 L985.5 85.6 L986.5 87.7 L986.5 99.2 L987.5 94.8 L987.5 85.9 L988.5 85.5 L988.5 95.6 L989.5 98 L989.5 90.1 L990.5 91.6 L990.5 102.1 L991.5 101.7 L991.5 88 L992.5 93 L992.5 100.7 L993.5 100.6 L993.5 93.6 L994.5 95.3 L994.5 103.9 L995.5 102.7 L995.5 96 L996.5 91.9 L996.5 103.8 L997.5 97.6 L997.5 356.1 L998.5 351.5 L998.5 357.2 L999.5 355.9 L999.5 350.1 L1000.5 349.5 L1000.5 357.4 L1001.5 356.8 L1001.5 349.1 L1002.5 349.3 L1002.5 356.4 L1003.5 356.5 L1003.5 349.8 L1004.5 352 L1004.5 357.9 L1005.5 359.6 L1005.5 353.2 L1006.5 355.2 L1006.5 363.8 L1007.5 360.6 L1007.5 355 L1008.5 354.8 L1008.5 362.1 L1009.5 366.2 L1009.5 356 L1010.5 356.8 L1010.5 363.8 L1011.5 364.4 L1011.5 358.8 L1012.5 359.5 L1012.5 366.9 L1013.5 367 L1013.5 358.2 L1014.5 357.6 L1014.5 362.9 L1015.5 360.9 L1015.5 353.9 L1016.5 354.4 L1016.5 361.7 L1017.5 361.6 L1017.5 355.5 L1018.5 352.9 L1018.5 363.2 L1019.5 362.6 L1019.5 354.1 L1020.5 354.1 L1020.5 361.4 L1021.5 362.3 L1021.5 354.4 L1022.5 353.9 L1022.5 358.8 L1023.5 358.1 L1023.5 351 L1024.5 359.1 L1024.5 66.3 L1025.5 99.9 L1025.5 93.2 L1026.5 93.6 L1026.5 100.3 L1027.5 99.5 L1027.5 90.7 L1028.5 93 L1028.5 101.1 L1029.5 99.3 L1029.5 91.4 L1030.5 88.2 L1030.5 100.1 L1031.5 97.3 L1031.5 88.7 L1032.5 93.6 L1032.5 101.4 L1033.5 103.2 L1033.5 95.1 L1034.5 92.6 L1034.5 108.5 L1035.5 108.3 L1035.5 95.1 L1036.5 96.4 L1036.5 103.7 L1037.5 96.8 L1037.5 365.1 L1038.5 356.9 L1038.5 362.2 L1039.5 364.2 L1039.5 357.7 L1040.5 359.3 L1040.5 365.6 L1041.5 365.8 L1041.5 358.7 L1042.5 354.4 L1042.5 365.9 L1043.5 361.7 L1043.5 356.8 L1044.5 355.1 L1044.5 362.5 L1045.5 362.1 L1045.5 356.1 L1046.5 356 L1046.5 360.8 L1047.5 362.3 L1047.5 355 L1048.5 358.5 L1048.5 365.1 L1049.5 365.2 L1049.5 355.6 L1050.5 357.2 L1050.5 362.1 L1051.5 362.9 L1051.5 86.3 L1052.5 109.4 L1052.5 102.9 L1053.5 98.8 L1053.5 116.3 L1054.5 112.7 L1054.5 103 L1055.5 104.9 L1055.5 111.3 L1056.5 114.5 L1056.5 105.4 L1057.5 103.3 L1057.5 113.2 L1058.5 108.5 L1058.5 100.1 L1059.5 98.8 L1059.5 106.9 L1060.5 107.8 L1060.5 100.8 L1061.5 101.7 L1061.5 109.1 L1062.5 109.4 L1062.5 100.3 L1063.5 103.7 L1063.5 110.9 L1064.5 103 L1064.5 364.6 L1065.5 355.2 L1065.5 361.4 L1066.5 362.2 L1066.5 354.5 L1067.5 355.3 L1067.5 365.7 L1068.5 363.6 L1068.5 354.9 L1069.5 356.7 L1069.5 361.4 L1070.5 360.8 L1070.5 356.2 L1071.5 355.9 L1071.5 362.1 L1072.5 360.1 L1072.5 352 L1073.5 351.5 L1073.5 357.9 L1074.5 359.3 L1074.5 352.4 L1075.5 353.9 L1075.5 360.5 L1076.5 362.1 L1076.5 355.2 L1077.5 354 L1077.5 360.7 L1078.5 360.1 L1078.5 86 L1079.5 109 L1079.5 101.6 L1080.5 101.2 L1080.5 109.5 L1081.5 107.2 L1081.5 97.3 L1082.5 100.6 L1082.5 108 L1083.5 110 L1083.5 101.9 L1084.5 100.4 L1084.5 112.9 L1085.5 110.4 L1085.5 101.3 L1086.5 94.1 L1086.5 109.1 L1087.5 108.1 L1087.5 99.9 L1088.5 98 L1088.5 105.9 L1089.5 106.5 L1089.5 94 L1090.5 96.7 L1090.5 107.9 L1091.5 100.8" stroke="#bcbcac" stroke-width="1"/><path d="M876.5 95.9 L877.5 97.6 L877.5 102.1 L878.5 102 L878.5 96.4 L879.5 96.7 L879.5 101.6 L880.5 104.4 L880.5 99.8 L881.5 102.2 L881.5 107 L882.5 106.8 L882.5 101.7 L883.5 101.5 L883.5 106.9 L884.5 105.7 L884.5 102.3 L885.5 102.5 L885.5 107 L886.5 106.2 L886.5 100.6 L887.5 101.7 L887.5 106.7 L888.5 110.8 L888.5 104.6 L889.5 107.4 L889.5 111.3 L890.5 110.9 L890.5 106.9 L891.5 104.6 L891.5 109.5 L892.5 109.8 L892.5 104.6 L893.5 103.8 L893.5 107.5 L894.5 106.7 L894.5 102.2 L895.5 102.3 L895.5 107.5 L896.5 107 L896.5 103 L897.5 102.3 L897.5 107 L898.5 103.4 L898.5 98.4 L899.5 96.8 L899.5 101.7 L900.5 100.6 L900.5 95.9 L901.5 97 L901.5 101.6 L902.5 101.4 L902.5 96.4 L903.5 97.3 L903.5 102.4 L904.5 104.4 L904.5 99.5 L905.5 98.7 L905.5 102.1 L906.5 100.9 L906.5 95.4 L907.5 95.6 L907.5 101.5 L908.5 101.6 L908.5 97.3 L909.5 98.6 L909.5 103 L910.5 103.6 L910.5 98.6 L911.5 99.3 L911.5 104 L912.5 102.8 L912.5 99.2 L913.5 95.3 L913.5 99.4 L914.5 98 L914.5 93 L915.5 93.7 L915.5 98.6 L916.5 98.5 L916.5 94 L917.5 94.1 L917.5 99.7 L918.5 99 L918.5 93.3 L919.5 95.4 L919.5 99.1 L920.5 100 L920.5 94.9 L921.5 91.3 L921.5 96.7 L922.5 95.7 L922.5 92.2 L923.5 92.2 L923.5 96.8 L924.5 98.6 L924.5 94.6 L925.5 92.1 L925.5 97.6 L926.5 95.1 L926.5 91.1 L927.5 89.9 L927.5 94.5 L928.5 92 L928.5 88.5 L929.5 84.4 L929.5 90.6 M931.5 350.9 L931.5 354.5 L932.5 355.7 L932.5 352.7 L933.5 351.4 L933.5 354.8 L934.5 353.9 L934.5 351.3 L935.5 351 L935.5 355.2 L936.5 354.4 L936.5 350.4 L937.5 350 L937.5 353.6 L938.5 353.8 L938.5 351 L939.5 351 L939.5 354.5 L940.5 355 L940.5 350.8 L941.5 349.4 L941.5 352.8 L942.5 351.7 L942.5 347.6 L943.5 346.8 L943.5 350.9 M945.5 87.4 L945.5 83 L946.5 85.3 L946.5 90.9 L947.5 92.8 L947.5 89.3 L948.5 88 L948.5 94.7 L949.5 93.8 L949.5 88.4 L950.5 89.4 L950.5 93.9 L951.5 95.6 L951.5 91.1 L952.5 93.4 L952.5 98.4 L953.5 99.5 L953.5 94.7 L954.5 95.9 L954.5 101.8 L955.5 102.8 L955.5 97.5 L956.5 96.3 L956.5 101.6 M958.5 351.6 L958.5 356.4 L959.5 356.7 L959.5 353.9 L960.5 354.1 L960.5 358.3 L961.5 359.2 L961.5 355.3 L962.5 356.2 L962.5 360.9 L963.5 361.4 L963.5 357.1 L964.5 356 L964.5 360.5 L965.5 359.5 L965.5 357.2 L966.5 357.7 L966.5 361.4 L967.5 363.1 L967.5 359.2 L968.5 359.5 L968.5 362.1 L969.5 362.9 L969.5 358.6 L970.5 359.6 L970.5 363 L971.5 361.2 L971.5 357.1 L972.5 355.7 L972.5 360.1 L973.5 359.1 L973.5 354.8 L974.5 356.1 L974.5 359.7 L975.5 361.3 L975.5 357.5 L976.5 356.7 L976.5 359.7 L977.5 359.8 L977.5 355.6 L978.5 355.5 L978.5 359.9 L979.5 359.3 L979.5 355.1 L980.5 353.7 L980.5 357.3 L981.5 358.2 L981.5 354 L982.5 356.4 L982.5 359.9 L983.5 359.1 L983.5 355.2 M985.5 92.9 L985.5 89.4 L986.5 87.8 L986.5 92.7 L987.5 92.6 L987.5 88.9 L988.5 88.9 L988.5 93.8 L989.5 97 L989.5 91.4 L990.5 93.6 L990.5 98.5 L991.5 98.6 L991.5 93.8 L992.5 93.2 L992.5 99.2 L993.5 100.5 L993.5 94.9 L994.5 96.9 L994.5 100.6 L995.5 102.4 L995.5 96.9 L996.5 98.4 L996.5 103.7 M998.5 353 L998.5 355.7 L999.5 354.5 L999.5 350.5 L1000.5 350.3 L1000.5 354.4 L1001.5 353.9 L1001.5 351.1 L1002.5 351.5 L1002.5 355.4 L1003.5 356.3 L1003.5 352.2 L1004.5 353.3 L1004.5 356.7 L1005.5 359.2 L1005.5 355 L1006.5 356.5 L1006.5 359.4 L1007.5 359.4 L1007.5 355.2 L1008.5 356.5 L1008.5 359.3 L1009.5 361.7 L1009.5 357.6 L1010.5 358.5 L1010.5 363.1 L1011.5 363.1 L1011.5 359.3 L1012.5 360.2 L1012.5 363.9 L1013.5 363.4 L1013.5 360.6 L1014.5 358.1 L1014.5 362.3 L1015.5 359.5 L1015.5 355.9 L1016.5 354.8 L1016.5 359.4 L1017.5 359.7 L1017.5 355.7 L1018.5 355.9 L1018.5 360.4 L1019.5 359.8 L1019.5 356.4 L1020.5 356.5 L1020.5 359.1 L1021.5 359.2 L1021.5 356.4 L1022.5 354.4 L1022.5 359 L1023.5 356.5 L1023.5 353.2 M1025.5 98.6 L1025.5 94.2 L1026.5 94.9 L1026.5 99.7 L1027.5 98.1 L1027.5 93.4 L1028.5 94.3 L1028.5 98.5 L1029.5 97.7 L1029.5 92.9 L1030.5 91.8 L1030.5 95.8 L1031.5 96.5 L1031.5 91.8 L1032.5 93.9 L1032.5 99.3 L1033.5 100.8 L1033.5 96.4 L1034.5 96 L1034.5 102.3 L1035.5 101.1 L1035.5 97.2 L1036.5 96.9 L1036.5 102.4 M1038.5 358 L1038.5 361.1 L1039.5 361.9 L1039.5 358.4 L1040.5 360.5 L1040.5 363.3 L1041.5 364.2 L1041.5 359.5 L1042.5 358.3 L1042.5 362.6 L1043.5 361.5 L1043.5 358.1 L1044.5 357.5 L1044.5 360.5 L1045.5 360.1 L1045.5 356.1 L1046.5 356.7 L1046.5 360.7 L1047.5 360.5 L1047.5 358.1 L1048.5 359.2 L1048.5 363.5 L1049.5 363.2 L1049.5 359.1 L1050.5 357.8 L1050.5 361.5 M1052.5 109.2 L1052.5 103.1 L1053.5 104.5 L1053.5 109.6 L1054.5 108.5 L1054.5 103.7 L1055.5 105.3 L1055.5 110.1 L1056.5 110.8 L1056.5 105.5 L1057.5 103.9 L1057.5 108 L1058.5 106.2 L1058.5 100.6 L1059.5 101.6 L1059.5 106.7 L1060.5 106.3 L1060.5 102.1 L1061.5 102.5 L1061.5 107.7 L1062.5 108.3 L1062.5 103.9 L1063.5 104.6 L1063.5 109.6 M1065.5 355.7 L1065.5 359.6 L1066.5 358.1 L1066.5 355 L1067.5 356.5 L1067.5 359.6 L1068.5 361.3 L1068.5 357.1 L1069.5 356.5 L1069.5 361.3 L1070.5 361 L1070.5 357.1 L1071.5 356 L1071.5 360.4 L1072.5 358.5 L1072.5 356.2 L1073.5 353 L1073.5 357.7 L1074.5 356.8 L1074.5 353.7 L1075.5 353.9 L1075.5 358.7 L1076.5 359.7 L1076.5 355.5 L1077.5 355.2 L1077.5 359.4 M1079.5 106.9 L1079.5 102.7 L1080.5 102.7 L1080.5 107.3 L1081.5 105.8 L1081.5 101.5 L1082.5 102.4 L1082.5 107.4 L1083.5 109.1 L1083.5 104.7 L1084.5 105.1 L1084.5 108.8 L1085.5 107.5 L1085.5 103.2 L1086.5 102.2 L1086.5 105.2 L1087.5 105.6 L1087.5 100.5 L1088.5 99.4 L1088.5 104.7 L1089.5 104.5 L1089.5 98.2 L1090.5 101.3 L1090.5 105.6" stroke="#e2de7c" stroke-width="1.2"/>
<path d="M1090.5 107.9 L1091.5 100.8 L1091.5 367.2 L1092.5 357.7 L1092.5 365.6 L1093.5 363.4 L1093.5 356.6 L1094.5 356.7 L1094.5 362.2 L1095.5 363.5 L1095.5 352.6 L1096.5 355.2 L1096.5 368.6 L1097.5 362.8 L1097.5 357.2 L1098.5 355.9 L1098.5 366.4 L1099.5 366.5 L1099.5 357.3 L1100.5 357.5 L1100.5 364.4 L1101.5 361.2 L1101.5 355.2 L1102.5 354.4 L1102.5 361.2 L1103.5 363.3 L1103.5 355 L1104.5 362 L1104.5 79.1 L1105.5 99.2" stroke="#a8e498" stroke-width="1"/><path d="M1092.5 359.4 L1092.5 363.2 L1093.5 361.1 L1093.5 358.2 L1094.5 358.3 L1094.5 361.2 L1095.5 362.1 L1095.5 357.5 L1096.5 357.6 L1096.5 361.2 L1097.5 361.2 L1097.5 358.7 L1098.5 359.4 L1098.5 363.2 L1099.5 363.3 L1099.5 359.2 L1100.5 358.4 L1100.5 361.9 L1101.5 359.3 L1101.5 355.5 L1102.5 355.8 L1102.5 360.1 L1103.5 360.4 L1103.5 355.9" stroke="#d8f65c" stroke-width="1.2"/>
<path d="M1104.5 79.1 L1105.5 99.2 L1105.5 92.2 L1106.5 93.1 L1106.5 101.8 L1107.5 101.4 L1107.5 92.4 L1108.5 88.5 L1108.5 97.4 L1109.5 95.5 L1109.5 87.1 L1110.5 87.7 L1110.5 97 L1111.5 97.5 L1111.5 88.9 L1112.5 91.8 L1112.5 98.6 L1113.5 104.9 L1113.5 91.8 L1114.5 91.9 L1114.5 100.7 L1115.5 102 L1115.5 93.1 L1116.5 92.1 L1116.5 102.9 L1117.5 101.5 L1117.5 92.4 L1118.5 96.5 L1118.5 363.1 L1119.5 352 L1119.5 358.4 L1120.5 357.8 L1120.5 350.1 L1121.5 351.8 L1121.5 357.9 L1122.5 358.5 L1122.5 348.2 L1123.5 352.1 L1123.5 357 L1124.5 359.8 L1124.5 350.9 L1125.5 351.7 L1125.5 358.3 L1126.5 358.7 L1126.5 353.1 L1127.5 354.4 L1127.5 359.9 L1128.5 359.2 L1128.5 354.1 L1129.5 353 L1129.5 359.6 L1130.5 361.1 L1130.5 352.9 L1131.5 352.5" stroke="#e6de30" stroke-width="1"/><path d="M1105.5 97.1 L1105.5 92.4 L1106.5 93.3 L1106.5 98.4 L1107.5 99.3 L1107.5 93.6 L1108.5 92 L1108.5 95.4 L1109.5 95.4 L1109.5 90.2 L1110.5 89.8 L1110.5 95.1 L1111.5 95.4 L1111.5 92.4 L1112.5 93.2 L1112.5 96.5 L1113.5 97.9 L1113.5 93.2 L1114.5 95.8 L1114.5 99.4 L1115.5 99.9 L1115.5 94.7 L1116.5 93.2 L1116.5 98.4 L1117.5 98.6 L1117.5 93.6 M1119.5 354.6 L1119.5 357 L1120.5 357.3 L1120.5 353.3 L1121.5 354.1 L1121.5 356.6 L1122.5 357.5 L1122.5 353.6 L1123.5 353.6 L1123.5 357 L1124.5 355.5 L1124.5 351.7 L1125.5 352.7 L1125.5 355.7 L1126.5 358.5 L1126.5 354.8 L1127.5 354.9 L1127.5 358.5 L1128.5 358.2 L1128.5 355 L1129.5 354.2 L1129.5 357.7 L1130.5 357.6 L1130.5 355.1 L1131.5 353.7" stroke="#fcf832" stroke-width="1.2"/>
<path d="M1130.5 352.9 L1131.5 352.5 L1131.5 357.9 L1132.5 357.1 L1132.5 352.3 L1133.5 353.3 L1133.5 358.9 L1134.5 360.6 L1134.5 354.7 L1135.5 355.3 L1135.5 360.2 L1136.5 363.3 L1136.5 352 L1137.5 351.1 L1137.5 360.2 L1138.5 359.8 L1138.5 352.5 L1139.5 351.3 L1139.5 359.9 L1140.5 359.7 L1140.5 354 L1141.5 355.6 L1141.5 360.9 L1142.5 361.5 L1142.5 356.7 L1143.5 355.6 L1143.5 360.9 L1144.5 359.3 L1144.5 353.6 L1145.5 353.3 L1145.5 360.1 L1146.5 358.4 L1146.5 350.9 L1147.5 352.5 L1147.5 358.5 L1148.5 357.9 L1148.5 353.1 L1149.5 354.7 L1149.5 361.2 L1150.5 361.3 L1150.5 354.7 L1151.5 353.7 L1151.5 359.4 L1152.5 363.9 L1152.5 352.4 L1153.5 351.7 L1153.5 358.7 L1154.5 363.1 L1154.5 354.1 L1155.5 353.8 L1155.5 360.3 L1156.5 361.6 L1156.5 354.6 L1157.5 355.1 L1157.5 360.7 L1158.5 359.2 L1158.5 354.1 L1159.5 352 L1159.5 356.8 L1160.5 356 L1160.5 348.6 L1161.5 351.1 L1161.5 357.5 L1162.5 359.8 L1162.5 351.4 L1163.5 349.2 L1163.5 358 L1164.5 358.1 L1164.5 353.5 L1165.5 350 L1165.5 361.4 L1166.5 360.1 L1166.5 351.1 L1167.5 352.4 L1167.5 357.4 L1168.5 360.7 L1168.5 351.2 L1169.5 354.7 L1169.5 362.2 L1170.5 360.1 L1170.5 353.7 L1171.5 353.8 L1171.5 360.6 L1172.5 360 L1172.5 353.4 L1173.5 354.3 L1173.5 359.6 L1174.5 357.6 L1174.5 351.5 L1175.5 351.7 L1175.5 357.2 L1176.5 362 L1176.5 352.6 L1177.5 353.3 L1177.5 360.1 L1178.5 360.1 L1178.5 355.1 L1179.5 355.1 L1179.5 359.8 L1180.5 361.4 L1180.5 355.7 L1181.5 355.7 L1181.5 362.3 L1182.5 360.4 L1182.5 355 L1183.5 355.9 L1183.5 365.2 L1184.5 364.4 L1184.5 357.3 L1185.5 359.5 L1185.5 366.2 L1186.5 364.8 L1186.5 356.9 L1187.5 357.1 L1187.5 363 L1188.5 362.9 L1188.5 356.3 L1189.5 356.9 L1189.5 363.2 L1190.5 362.3 L1190.5 355.9 L1191.5 356.6 L1191.5 364.7 L1192.5 363.8 L1192.5 357.9 L1193.5 357.7 L1193.5 363.4 L1194.5 361.7 L1194.5 356.9 L1195.5 355.8 L1195.5 362.7 L1196.5 361.1 L1196.5 355.5 L1197.5 356.1 L1197.5 360.9 L1198.5 360.5 L1198.5 354 L1199.5 356 L1199.5 361.8 L1200.5 363.2 L1200.5 354.6 L1201.5 354.1 L1201.5 361.1 L1202.5 357.9 L1202.5 352.1 L1203.5 351.9 L1203.5 357.5 L1204.5 358.8 L1204.5 352.6 L1205.5 351.3 L1205.5 358.6 L1206.5 357.6 L1206.5 352.3 L1207.5 353.4 L1207.5 358.4 L1208.5 362.8 L1208.5 352.6 L1209.5 352.6 L1209.5 359.2 L1210.5 356.4 L1210.5 351.7 L1211.5 349 L1211.5 359.6 L1212.5 359 L1212.5 353.4 L1213.5 352.1 L1213.5 359.2 L1214.5 358.7 L1214.5 353.5 L1215.5 352.4 L1215.5 358.6 L1216.5 359.5 L1216.5 351.6 L1217.5 347.8 L1217.5 359.1 L1218.5 355.8 L1218.5 349.2 L1219.5 345.8 L1219.5 358.4 L1220.5 356.9 L1220.5 350.7 L1221.5 349.9 L1221.5 357 L1222.5 360.3 L1222.5 351.4 L1223.5 350 L1223.5 356.5 L1224.5 356.8 L1224.5 351.1 L1225.5 350.5" stroke="#a8e498" stroke-width="1"/><path d="M1130.5 355.1 L1131.5 353.7 L1131.5 357.6 L1132.5 356 L1132.5 352.9 L1133.5 354.7 L1133.5 357 L1134.5 359.4 L1134.5 355.1 L1135.5 355.4 L1135.5 359.5 L1136.5 358.1 L1136.5 354.6 L1137.5 355.6 L1137.5 358.3 L1138.5 358.7 L1138.5 356.1 L1139.5 354.7 L1139.5 358 L1140.5 359 L1140.5 355.6 L1141.5 355.9 L1141.5 360.2 L1142.5 361 L1142.5 357.2 L1143.5 355.7 L1143.5 359.7 L1144.5 358.2 L1144.5 354.3 L1145.5 353.3 L1145.5 357.9 L1146.5 356.9 L1146.5 353.2 L1147.5 352.7 L1147.5 356.3 L1148.5 356.9 L1148.5 353.9 L1149.5 355.3 L1149.5 359.7 L1150.5 360 L1150.5 356.5 L1151.5 354.5 L1151.5 358.8 L1152.5 356.9 L1152.5 353.6 L1153.5 353.7 L1153.5 357.9 L1154.5 358.4 L1154.5 355.2 L1155.5 355.5 L1155.5 358.2 L1156.5 359.1 L1156.5 356 L1157.5 355.8 L1157.5 359.8 L1158.5 359.1 L1158.5 355.4 L1159.5 352.6 L1159.5 356.3 L1160.5 355 L1160.5 352.3 L1161.5 352.8 L1161.5 356.9 L1162.5 356.5 L1162.5 352.5 L1163.5 354 L1163.5 357.5 L1164.5 357.3 L1164.5 354.4 L1165.5 354.9 L1165.5 358.4 L1166.5 357.6 L1166.5 353.8 L1167.5 352.7 L1167.5 356.7 L1168.5 356.8 L1168.5 353 L1169.5 355.2 L1169.5 358.4 L1170.5 359 L1170.5 356 L1171.5 355.8 L1171.5 359.1 L1172.5 359.2 L1172.5 354.9 L1173.5 354.5 L1173.5 358.7 L1174.5 357.3 L1174.5 352.6 L1175.5 351.8 L1175.5 355.6 L1176.5 357 L1176.5 353.2 L1177.5 355.2 L1177.5 359.5 L1178.5 359 L1178.5 356.2 L1179.5 355.7 L1179.5 359.1 L1180.5 360 L1180.5 355.6 L1181.5 356.8 L1181.5 359.8 L1182.5 359.4 L1182.5 356.1 L1183.5 356.6 L1183.5 361.1 L1184.5 363.3 L1184.5 358.7 L1185.5 360.6 L1185.5 363.5 L1186.5 363.7 L1186.5 359 L1187.5 359.4 L1187.5 362.4 L1188.5 361.3 L1188.5 359.1 L1189.5 358.4 L1189.5 360.8 L1190.5 359.6 L1190.5 356 L1191.5 356.5 L1191.5 360.3 L1192.5 362.3 L1192.5 359.1 L1193.5 359.7 L1193.5 362 L1194.5 361.4 L1194.5 357.4 L1195.5 356.3 L1195.5 360 L1196.5 360.5 L1196.5 356.2 L1197.5 356.3 L1197.5 360 L1198.5 360.1 L1198.5 355.7 L1199.5 357 L1199.5 360.5 L1200.5 360.2 L1200.5 357.6 L1201.5 356.5 L1201.5 359.1 L1202.5 356.9 L1202.5 353.5 L1203.5 352.7 L1203.5 356.7 L1204.5 356.4 L1204.5 353.5 L1205.5 352.9 L1205.5 357.2 L1206.5 356.3 L1206.5 352.8 L1207.5 353.6 L1207.5 358.1 L1208.5 358 L1208.5 354.2 L1209.5 354.2 L1209.5 357.3 L1210.5 355.4 L1210.5 352.3 L1211.5 352.9 L1211.5 356 L1212.5 357.4 L1212.5 354 L1213.5 353.8 L1213.5 357.2 L1214.5 357.2 L1214.5 354 L1215.5 354.5 L1215.5 357.8 L1216.5 357.1 L1216.5 353.8 L1217.5 351.4 L1217.5 354.6 L1218.5 353.3 L1218.5 350.7 L1219.5 351.9 L1219.5 354.9 L1220.5 356.4 L1220.5 353 L1221.5 352.8 L1221.5 355.7 L1222.5 355.3 L1222.5 352.7 L1223.5 352.9 L1223.5 355.3 L1224.5 354.9 L1224.5 351.3 L1225.5 351.2" stroke="#d8f65c" stroke-width="1.2"/>
</g>
<rect x="114.5" y="61.5" width="12.5" height="307.0" fill="none" stroke="#9ccaf4" stroke-width="1" opacity="1"/>
<rect x="128.0" y="61.5" width="427.5" height="307.0" fill="none" stroke="#dc8c8c" stroke-width="1" opacity="1"/>
<rect x="274.5" y="61.5" width="26.5" height="307.0" fill="none" stroke="#e4ecfa" stroke-width="1" opacity="1"/>
<rect x="286.8" y="62" width="2" height="306" fill="#6aa2ea"/>
<rect x="502.5" y="76.5" width="13.0" height="277.0" fill="none" stroke="#f8b848" stroke-width="1" opacity="1"/>
<rect x="556.5" y="61.5" width="39.0" height="307.0" fill="none" stroke="#3c9cf0" stroke-width="1" opacity="1"/>
<rect x="568.4" y="62" width="1.6" height="306" fill="#3c9cf0"/><rect x="581.4" y="62" width="1.6" height="306" fill="#3c9cf0"/>
<rect x="596.5" y="61.5" width="66.0" height="307.0" fill="none" stroke="#38c070" stroke-width="1" opacity="1"/>
<rect x="622.5" y="76.5" width="13.0" height="279.0" fill="none" stroke="#d0ec48" stroke-width="1" opacity="1"/>
<rect x="663.5" y="61.5" width="106.0" height="307.0" fill="none" stroke="#48acdc" stroke-width="1" opacity="0.8"/>
<rect x="770.5" y="61.5" width="106.0" height="307.0" fill="none" stroke="#48acdc" stroke-width="1" opacity="0.8"/>
<rect x="930.5" y="76.5" width="13.0" height="284.0" fill="none" stroke="#b4b4c4" stroke-width="1" opacity="1"/>
<rect x="1091.5" y="61.5" width="13.0" height="307.0" fill="none" stroke="#3c9cf0" stroke-width="1" opacity="0.75"/>
<rect x="1105.5" y="61.5" width="25.0" height="307.0" fill="none" stroke="#7cc8c0" stroke-width="1" opacity="0.65"/>
<rect x="1131.5" y="61.5" width="93.0" height="307.0" fill="none" stroke="#48a4dc" stroke-width="1" opacity="0.8"/>
<text x="669.5" y="57.0" font-size="11" text-anchor="middle" fill="#fff" >Std Ext 0x18aabb01</text>
<text x="341.5" y="72.0" font-size="11" text-anchor="middle" fill="#fff" >ID - Identifier = 0x18aabb01</text>
<text x="575.0" y="72.0" font-size="11" text-anchor="middle" fill="#fff" >r1</text>
<text x="589.0" y="72.0" font-size="11" text-anchor="middle" fill="#fff" >r0</text>
<text x="630.0" y="72.0" font-size="11" text-anchor="middle" fill="#fff" >DLC = 2</text>
<text x="716.5" y="72.0" font-size="11" text-anchor="middle" fill="#fff" >Data = 0x55</text>
<text x="823.5" y="72.0" font-size="11" text-anchor="middle" fill="#fff" >Data = 0xaa</text>
<text x="984.0" y="72.0" font-size="11" text-anchor="middle" fill="#fff" >CRC = 0x36a</text>
<text x="1118.0" y="72.0" font-size="11" text-anchor="middle" fill="#fff" >ACK</text>
<text x="1178.0" y="72.0" font-size="11" text-anchor="middle" fill="#fff" >EOF</text>
<text x="509.3" y="86.6" font-size="11" text-anchor="middle" fill="#fffbe0" textLength="12.4" lengthAdjust="spacingAndGlyphs">SB</text>
<text x="629.3" y="86.6" font-size="11" text-anchor="middle" fill="#fffbe0" textLength="12.4" lengthAdjust="spacingAndGlyphs">SB</text>
<text x="937.3" y="86.6" font-size="11" text-anchor="middle" fill="#fff" textLength="12.4" lengthAdjust="spacingAndGlyphs">SB</text>
<text x="66.0" y="50.6" font-size="12.5" text-anchor="end" fill="#e8e44a" >2.62 V</text>
<text x="66.0" y="89.8" font-size="12.5" text-anchor="end" fill="#e8e44a" >2.23 V</text>
<text x="66.0" y="135.8" font-size="12.5" text-anchor="end" fill="#e8e44a" >1.84 V</text>
<text x="66.0" y="182.8" font-size="12.5" text-anchor="end" fill="#e8e44a" >1.45 V</text>
<text x="66.0" y="228.8" font-size="12.5" text-anchor="end" fill="#e8e44a" >1.06 V</text>
<text x="66.0" y="275.8" font-size="12.5" text-anchor="end" fill="#e8e44a" >670 mV</text>
<text x="66.0" y="321.8" font-size="12.5" text-anchor="end" fill="#e8e44a" >280 mV</text>
<text x="66.0" y="368.8" font-size="12.5" text-anchor="end" fill="#e8e44a" >-110 mV</text>
<text x="66.0" y="407.8" font-size="12.5" text-anchor="end" fill="#e8e44a" >-500 mV</text>
<text x="70.0" y="424.0" font-size="12.5" text-anchor="start" fill="#e8e44a" >-3.32 µs</text>
<text x="190.5" y="424.0" font-size="12.5" text-anchor="middle" fill="#e8e44a" >5.65 µs</text>
<text x="310.5" y="424.0" font-size="12.5" text-anchor="middle" fill="#e8e44a" >14.61 µs</text>
<text x="430.5" y="424.0" font-size="12.5" text-anchor="middle" fill="#e8e44a" >23.58 µs</text>
<text x="550.5" y="424.0" font-size="12.5" text-anchor="middle" fill="#e8e44a" >32.55 µs</text>
<text x="670.5" y="424.0" font-size="12.5" text-anchor="middle" fill="#e8e44a" >41.52 µs</text>
<text x="790.5" y="424.0" font-size="12.5" text-anchor="middle" fill="#e8e44a" >50.48 µs</text>
<text x="910.5" y="424.0" font-size="12.5" text-anchor="middle" fill="#e8e44a" >59.45 µs</text>
<text x="1030.5" y="424.0" font-size="12.5" text-anchor="middle" fill="#e8e44a" >68.42 µs</text>
<text x="1150.5" y="424.0" font-size="12.5" text-anchor="middle" fill="#e8e44a" >77.38 µs</text>
<text x="1270.0" y="424.0" font-size="12.5" text-anchor="end" fill="#e8e44a" >86.35 µs</text>
<rect x="55" y="337.5" width="15" height="10.5" rx="2" fill="#f0ea28"/>
<text x="62.5" y="346.2" font-size="9" text-anchor="middle" fill="#141400" font-weight="bold">Z1</text>
<path d="M60 350.5 H70" stroke="#f0ea28" stroke-width="1.4"/>
<path d="M114.5 410.5 L118.5 417.5 L110.5 417.5 Z" fill="#f0ea28"/>
</svg>


<div id="tbl">
<div class="row hdr" style="top:0"><span style="left:0;width:79px;background:#fdb414;"></span>
<span style="left:1px;color:#3a1c00">CAN Std</span>
<span style="left:81px;color:#fff">Time</span>
<span style="left:161px;color:#fff">Format</span>
<span style="left:241px;color:#fff">ID</span>
<span style="left:321px;color:#fff">IDE</span>
<span style="left:353px;color:#fff">RTR</span>
<span style="left:385px;color:#fff">DLC</span>
<span style="left:417px;color:#fff">Data</span>
<span style="left:966px;color:#fff">CRC</span>
<span style="left:1046px;color:#fff">BitRate</span>
<span style="left:1126px;color:#fff">Status</span>
</div>
<div class="row" style="top:16px;height:15px;background:#aaa818;border-top:1px solid #8aa8a0;border-bottom:1px solid #5a86a8;box-sizing:content-box;top:15px;line-height:17px;color:#f6f284;">
<span style="left:1px">1</span>
<span style="left:81px">1 ns</span>
<span style="left:161px">Std Ext</span>
<span style="left:241px">0x18aabb01</span>
<span style="left:321px">1</span>
<span style="left:353px">0</span>
<span style="left:385px">2</span>
<span style="left:417px">55 aa</span>
<span style="left:966px">0x36a</span>
<span style="left:1046px">999644</span>
</div>
<div class="row" style="top:32px;color:#fff">
<span style="left:1px">2</span>
<span style="left:81px">120.09 µs</span>
<span style="left:161px">Std Ext</span>
<span style="left:241px">0x18aabb02</span>
<span style="left:321px">1</span>
<span style="left:353px">0</span>
<span style="left:385px">3</span>
<span style="left:417px">55 aa ff</span>
<span style="left:966px">0x3615</span>
<span style="left:1046px">999680</span>
</div>
<div class="row" style="top:48px;color:#fff">
<span style="left:1px">3</span>
<span style="left:81px">238.17 µs</span>
<span style="left:161px">Std Ext</span>
<span style="left:241px">0x18aabb03</span>
<span style="left:321px">1</span>
<span style="left:353px">0</span>
<span style="left:385px">4</span>
<span style="left:417px">00 55 aa ff</span>
<span style="left:966px">0x6a10</span>
<span style="left:1046px">999706</span>
</div>
<div class="c" style="left:79px;top:0;height:15px"></div>
<div class="c" style="left:79px;top:32px;height:30px"></div>
<div class="c" style="left:159px;top:0;height:15px"></div>
<div class="c" style="left:159px;top:32px;height:30px"></div>
<div class="c" style="left:239px;top:0;height:15px"></div>
<div class="c" style="left:239px;top:32px;height:30px"></div>
<div class="c" style="left:319px;top:0;height:15px"></div>
<div class="c" style="left:319px;top:32px;height:30px"></div>
<div class="c" style="left:351px;top:0;height:15px"></div>
<div class="c" style="left:351px;top:32px;height:30px"></div>
<div class="c" style="left:383px;top:0;height:15px"></div>
<div class="c" style="left:383px;top:32px;height:30px"></div>
<div class="c" style="left:415px;top:0;height:15px"></div>
<div class="c" style="left:415px;top:32px;height:30px"></div>
<div class="c" style="left:964px;top:0;height:15px"></div>
<div class="c" style="left:964px;top:32px;height:30px"></div>
<div class="c" style="left:1044px;top:0;height:15px"></div>
<div class="c" style="left:1044px;top:32px;height:30px"></div>
<div class="c" style="left:1124px;top:0;height:15px"></div>
<div class="c" style="left:1124px;top:32px;height:30px"></div>
<div class="abs" style="left:0;top:47px;width:1239px;height:0;border-top:1px dotted #777"></div>
</div>
<div class="abs" style="left:1245px;top:440px;width:32px;height:66px;background:#2b2b2b;border:1px solid #8c8c8c;box-sizing:border-box;"></div>
<div class="abs" style="left:1246px;top:441px;width:30px;height:30px;background:#5a5a5a;"></div>
<svg class="abs" style="left:1245px;top:440px" width="32" height="66" viewBox="1245 440 32 66">
<path d="M1261.5 442.3 L1273.6 454.4 L1249.4 454.4 Z" fill="#000" stroke="#e4e4e4" stroke-width="1"/>
<path d="M1261.5 469 L1273.6 457 L1249.4 457 Z" fill="#000" stroke="#e4e4e4" stroke-width="1"/>
</svg>
<div class="abs" style="left:3px;top:508px;width:99px;height:16px;background:#f3ee22;"></div>
<div class="abs" style="left:3px;top:524px;width:99px;height:33px;background:#2c4f76;border-right:2px solid #2f7fd6;border-bottom:2px solid #2f7fd6;border-left:1px solid #2f7fd6;box-sizing:border-box;"></div>
<div class="desc" style="left:7px;top:509px;color:#1a1a00;font-size:13.5px">Z1</div>
<div class="desc" style="right:1182px;top:509px;color:#1a1a00;font-size:13px">zoom(F1)</div>
<div class="desc" style="right:1181px;top:526px;color:#e8f0ff;font-size:13px">390 mV/div</div>
<div class="desc" style="right:1181px;top:541px;color:#e8f0ff;font-size:13px">9.0 µs/div</div>
<div class="abs" style="left:104px;top:508px;width:97px;height:48px;border:1px dashed #e8e8e8;box-sizing:border-box;"></div>
<div class="abs" style="left:144px;top:531px;width:14px;height:2px;background:#fff"></div>
<div class="abs" style="left:150px;top:525px;width:2px;height:14px;background:#fff"></div>

<div class="abs" style="left:1063px;top:508px;width:111px;height:15px;background:#fff;"></div>
<div class="abs" style="left:1063px;top:523px;width:111px;height:34px;background:#4a4a4a;"></div>
<div class="desc" style="left:1067px;top:509px;color:#111;">Tbase</div>
<div class="desc" style="right:107px;top:509px;color:#111;">260 µs</div>
<div class="desc" style="right:107px;top:526px;color:#f4f4f4;">500 µs/div</div>
<div class="desc" style="left:1066px;top:541px;color:#f4f4f4;">2.5 MS</div>
<div class="desc" style="right:107px;top:541px;color:#f4f4f4;">500 MS/s</div>
<div class="abs" style="left:1178px;top:508px;width:96px;height:15px;background:#fff;"></div>
<div class="abs" style="left:1178px;top:523px;width:97px;height:34px;background:#4a4a4a;"></div>
<div class="desc" style="left:1181px;top:509px;color:#111;">Trigger</div>
<div class="abs" style="left:1229px;top:509px;width:19px;height:13px;background:#000;border-radius:3px;"></div>
<div class="abs" style="left:1251px;top:509px;width:21px;height:13px;background:#000;border-radius:3px;"></div>
<div class="abs" style="left:1229px;top:509px;width:19px;height:9px;overflow:hidden;color:#fff;font-size:13.5px;line-height:10.5px;text-align:center;letter-spacing:-0.3px;">C1</div>
<div class="abs" style="left:1251px;top:509px;width:21px;height:9px;overflow:hidden;color:#fff;font-size:13.5px;line-height:10.5px;text-align:center;letter-spacing:-0.3px;">DC</div>
<div class="desc" style="left:1181px;top:526px;color:#f4f4f4;">Stop</div>
<div class="desc" style="right:7px;top:526px;color:#f4f4f4;">-320 mV</div>
<div class="desc" style="left:1181px;top:541px;color:#f4f4f4;">Edge</div>
<div class="desc" style="right:7px;top:541px;color:#f4f4f4;">Positive</div>

<div id="tabs">
<div class="abs" style="left:241px;top:0;width:90px;height:30px;background:linear-gradient(#323232 0%,#323232 40%,#2a4868 70%,#1f68b4 100%);"></div>
<div class="tb" style="left:-15px;width:120px;color:#d0d0d0">Utilities</div>
<div class="tb" style="left:62px;width:120px;color:#d0d0d0">Status</div>
<div class="tb" style="left:139px;width:120px;color:#d0d0d0">Remote</div>
<div class="tb" style="left:225px;width:120px;color:#ffffff">Hardcopy</div>
<div class="tb" style="left:321px;width:120px;color:#d0d0d0">Aux Output</div>
<div class="tb" style="left:420px;width:120px;color:#d0d0d0">Date/Time</div>
<div class="tb" style="left:508px;width:120px;color:#d0d0d0">Options</div>
<div class="ts" style="left:85px"></div>
<div class="ts" style="left:159px"></div>
<div class="ts" style="left:240px"></div>
<div class="ts" style="left:331px"></div>
<div class="ts" style="left:433px"></div>
<div class="ts" style="left:528px"></div>
<div class="ts" style="left:607px"></div>
<svg class="abs" style="left:1222px;top:7px" width="16" height="16" viewBox="0 0 16 16"><circle cx="8" cy="8" r="6.6" fill="#f0f0f0"/><path d="M5.3 5.3 L10.7 10.7 M10.7 5.3 L5.3 10.7" stroke="#2f2f2f" stroke-width="2" stroke-linecap="round"/></svg>
<div class="abs" style="left:1242px;top:9px;font-size:10px;line-height:13px;font-weight:bold;color:#e8e8e8;letter-spacing:0.2px;">CLOSE</div>
</div>
<div id="panel">
<div class="btn" style="left:19px;top:4px"></div>
<div class="btn" style="left:104px;top:4px"></div>
<div class="btn" style="left:19px;top:60px;background:#2a4a6c;border:2px solid #4a8ee6;"></div>
<div class="btn" style="left:104px;top:60px"></div>
<div class="btn" style="left:19px;top:116px"></div>
<div class="lbl" style="left:47px;top:39px">Printer</div>
<div class="lbl" style="left:132px;top:39px">Clipboard</div>
<div class="lbl" style="left:47px;top:95px">File</div>
<div class="lbl" style="left:132px;top:95px">E-Mail</div>
<div class="lbl" style="left:47px;top:151px">LabNotebook</div>
<div class="abs" style="left:184px;top:4px;width:1px;height:164px;background:#484848"></div>
<svg class="abs" style="left:0;top:0" width="200" height="176" viewBox="0 596 200 176">
<!-- printer -->
<path d="M33 626 L49 631.5 L61 624 L61 626.5 L49 633 L33 628 Z" fill="#f4f4f4"/>
<path d="M31.5 617 L49 622 L49 631 L31.5 625.5 Z" fill="#c2c2c0"/>
<path d="M49 622 L62.5 615 L62.5 622.5 L49 631 Z" fill="#8e8e8c"/>
<path d="M31.5 617 L45 611 L62.5 615 L49 622 Z" fill="#e4e4e2"/>
<path d="M35 619.5 L47 623 L47 628.5 L35 625 Z" fill="#d6d6d4"/>
<path d="M44.5 613.6 L49.6 603.6 L58.2 606.2 L53.4 616 Z" fill="#f0f6ff" stroke="#9ab0d8" stroke-width="0.5"/>
<path d="M48.6 607.2 L55.4 609.2 M47.6 609.2 L54.4 611.2 M46.6 611.2 L53.4 613.2 M49.6 605.4 L56.4 607.4" stroke="#2a4a98" stroke-width="0.9" stroke-dasharray="1.6 0.8"/>
<!-- clipboard -->
<rect x="118" y="610" width="29" height="24" fill="#ffffff"/>
<rect x="126" y="611" width="21" height="23" fill="#e6ffff"/>
<path d="M118.2 634 V610.2 H147" fill="none" stroke="#000" stroke-width="1.3"/>
<path d="M126 615 H147 M126 619 H147 M126 623 H147 M126 627 H147 M126 630.8 H147" stroke="#7ce8ec" stroke-width="0.9"/>
<path d="M129 627.5 V607.6 Q129 603.6 132.5 603.6 Q136 603.6 136 607.6 V628 Q136 631 133.4 631 Q130.9 631 130.9 628 V614" fill="none" stroke="#2a2a2a" stroke-width="1.5"/>
<path d="M129 627.5 V607.6 Q129 603.6 132.5 603.6 Q136 603.6 136 607.6 V628 Q136 631 133.4 631 Q130.9 631 130.9 628 V614" fill="none" stroke="#c8c8c8" stroke-width="0.5"/>
<!-- file PICT -->
<path d="M32 658.5 H61.8 V678 Q58 678.5 56.5 681 Q53 681.5 52 684.5 Q46 686.5 42 688.4 H32 Z" fill="#fff" stroke="#101010" stroke-width="1"/>
<path d="M39 667.6 H61.2 V677.6 Q57.6 678.2 56.2 680.6 Q52.6 681.2 51.6 684 Q46 686 41.6 687.8 H39 Z" fill="#0c3a3c"/>
<path d="M39.5 686.5 Q44 686 45.6 678 Q47.6 670 50 674 Q52.4 680.4 57 679" fill="none" stroke="#b4f028" stroke-width="1.3"/>
<path d="M40 674.5 H61 M47.6 668 V686 M55 668 V680" stroke="#e8ffff" stroke-width="0.6" stroke-dasharray="0.7 1.5"/>
<text x="46.8" y="666" font-size="6.4" font-weight="bold" fill="#c8102c" text-anchor="middle" font-family="Liberation Mono, monospace" letter-spacing="-0.3">PICT1</text>
<!-- email -->
<rect x="116.4" y="664.4" width="31" height="19" fill="#fbfbf6" stroke="#c8c8c0" stroke-width="0.6"/>
<path d="M116.4 683.4 H147.4 V680 H120 Z" fill="#e0dcc8"/>
<rect x="141.2" y="667.4" width="3.6" height="3.8" fill="#b81420"/>
<path d="M128 675.2 H145 M128 677.8 H145 M128 680.4 H140" stroke="#3858b0" stroke-width="1"/>
<path d="M118.6 670 L119.6 662.6 L122 664.6 Q128 657.4 137 658.4 L139 661.6 Q131 661 125 667.4 L127 669.4 Z" fill="#1e54d8"/>
<path d="M124 664 Q129 658.8 137 659.6" fill="none" stroke="#48c8f8" stroke-width="1.4"/>
<path d="M127.6 688.6 L136 691.4 L135.6 688.6 Q142 686 144.6 679.4 L141 678.2 Q139 683.6 134.4 685.4 L134 683 Z" fill="#1a3ed0"/>
<path d="M135 687 Q140.6 684.6 142.8 679.4" fill="none" stroke="#3cd0f8" stroke-width="1.6"/>
<!-- notebook -->
<rect x="39" y="718" width="18" height="22.4" fill="#fbfbff" stroke="#d8d8e4" stroke-width="0.8"/>
<rect x="39" y="717.6" width="18" height="2.6" fill="#e8742c"/>
<rect x="39" y="720.2" width="18" height="1.6" fill="#f4b890"/>
<path d="M40.5 725.5 H55.5 M40.5 728.5 H55.5 M40.5 731.5 H55.5 M40.5 734.5 H55.5 M40.5 737.5 H55.5" stroke="#c4c4f4" stroke-width="0.8"/>
</svg>
<div class="lbl" style="left:363px;top:10px">File Format</div>
<div class="val" style="left:214px;top:28px">Portable Network Graphics (.png)</div>
<div class="ul" style="left:207px;top:45px;width:315px"></div>
<div class="lbl" style="left:277px;top:72px">Colors</div>
<div class="val" style="left:214px;top:89px">Standard</div>
<div class="ul" style="left:207px;top:106px;width:143px"></div>
<div class="val" style="left:208px;top:114px;line-height:16px;color:#ececec">Print colors use a white<br>background to save<br>toner/ink.</div>
<div class="lbl" style="left:775px;top:10px">File Name</div>
<div class="val" style="left:598px;top:28px">CAN1.png</div>
<div class="ul" style="left:591px;top:45px;width:371px"></div>
<div class="lbl" style="left:750px;top:60px">Directory</div>
<div class="val" style="left:596px;top:78px">C:\Users\robert.mart\Desktop</div>
<div class="ul" style="left:591px;top:95px;width:325px"></div>
<div class="abs" style="left:917px;top:60px;width:44px;height:35px;background:#535353;border:2px solid #6e6e6e;box-sizing:border-box;font-size:13px;line-height:32px;text-align:center;color:#fff;">Browse</div>
<div class="lbl" style="left:669px;top:122px">Annotate Before Print</div>
<div class="abs" style="left:661px;top:141px;width:16px;height:15px;background:#fff"></div>
<div class="lbl" style="left:867px;top:122px">Hardcopy Area</div>
<div class="val" style="left:781px;top:140px">DSO Window</div>
<div class="ul" style="left:774px;top:157px;width:188px"></div>
<div class="abs" style="left:577px;top:151px;width:4px;height:4px;border-left:1px solid #888;border-bottom:1px solid #888"></div>
<div class="abs" style="left:757px;top:151px;width:4px;height:4px;border-right:1px solid #888;border-bottom:1px solid #888"></div>
<div class="abs" style="left:1005px;top:10px;width:105px;height:148px;background:#fff"></div>
<svg class="abs" style="left:1012px;top:17px" width="91" height="68" viewBox="0 0 91 68">
<rect width="91" height="68" fill="#3c3088"/>
<rect width="91" height="37" fill="#04040c"/>
<rect width="91" height="3.5" fill="#3a3478"/>
<rect x="82" y="0.8" width="7" height="2" fill="#6a64a8"/>
<path d="M1 10 H90 M1 17.5 H90 M1 25 H90 M1 31 H90 M23 4 V36 M45.5 4 V36 M68 4 V36" stroke="#1c1c34" stroke-width="0.7" fill="none"/>
<path d="M1.3 6 H16.5 V17.5 H31 V6 H45.6 V17.5 H60 V6 H75.4 V17.5 H90" fill="none" stroke="#a08424" stroke-width="0.9"/>
<path d="M1.3 27 L10 33.4 L24 22.5 L39 33.4 L53.5 22.5 L68 33.4 L82 22.5 L90 28" fill="none" stroke="#1a6e62" stroke-width="0.9"/>
<rect x="0" y="37" width="91" height="9.5" fill="#04040c"/>
<rect x="1" y="37.2" width="9.5" height="4.4" fill="#d8d048"/><rect x="1" y="39.6" width="9.5" height="2" fill="#b8a8a0"/>
<rect x="12" y="37.2" width="11" height="4.4" fill="#50d070"/><rect x="12" y="39.6" width="11" height="2" fill="#a8c8b0"/>
<rect x="66" y="37.2" width="12.5" height="4.4" fill="#b0acd0"/><rect x="80" y="37.2" width="10" height="4.4" fill="#b0acd0"/>
<rect x="0" y="42.2" width="47" height="4" fill="#2c2468"/><rect x="57" y="42.2" width="34" height="4" fill="#2c2468"/>
<rect x="7" y="43" width="3" height="2.4" fill="#c8c080"/><rect x="12.5" y="43" width="3" height="2.4" fill="#c04080"/><rect x="18" y="43" width="3" height="2.4" fill="#4088c0"/><rect x="23" y="43" width="3" height="2.4" fill="#8070c0"/><rect x="28" y="43" width="4" height="2.4" fill="#a04060"/><rect x="37" y="43" width="5" height="2.4" fill="#38a868"/>
<rect x="63" y="42.6" width="22" height="3.2" fill="#04040c"/><rect x="86.5" y="42.8" width="3.5" height="2.8" fill="#8078c0"/>
<rect x="0" y="46.5" width="56" height="21" fill="#40348e"/><rect x="57" y="46.5" width="34" height="21" fill="#443892"/>
<rect x="56" y="44" width="1.2" height="24" fill="#241c58"/>
<rect x="0" y="66.6" width="91" height="1.4" fill="#120c38"/>
<rect x="1.5" y="53" width="4" height="4.4" fill="#e0d8ff"/><rect x="7" y="53" width="4" height="4.4" fill="#8c80d8"/>
<rect x="2" y="59.5" width="4" height="4" fill="#6a6ad0"/>
<circle cx="4.5" cy="49.5" r="1" fill="#e8e8ff"/><rect x="24" y="47.6" width="2" height="3.6" fill="#c8c8f8"/>
<path d="M15 49 H20 M28 49 H35 M39 53.6 H47 M43 56.4 H51" stroke="#8c84d0" stroke-width="0.8"/>
<rect x="13" y="61" width="6.6" height="4" fill="#6c62b8" stroke="#b8b0e8" stroke-width="0.6"/><rect x="21" y="61" width="6" height="4" fill="#6c62b8" stroke="#b8b0e8" stroke-width="0.6"/>
<rect x="28.5" y="61" width="6.5" height="4" fill="#8c84d0" stroke="#b8b0e8" stroke-width="0.6"/><rect x="30.5" y="62" width="2.6" height="2" fill="#fff"/>
<rect x="36.5" y="61" width="6.5" height="4" fill="#6a74e0"/>
<path d="M60 48.4 H66 M72 48.4 H80 M59 53 H66 M70 53 H78" stroke="#7c74c4" stroke-width="1.2"/>
<path d="M59 58.4 H75" stroke="#7c74c4" stroke-width="0.6"/><circle cx="65" cy="58.4" r="1.1" fill="#f0f0ff"/><circle cx="78" cy="58.4" r="1.1" fill="#f0f0ff"/>
<rect x="83" y="53" width="7" height="6" fill="#58a050"/>
<rect x="57.5" y="61" width="4.5" height="4" fill="#8c84d0"/><rect x="64" y="61" width="4.5" height="4" fill="#a49ce0"/><rect x="70.5" y="61" width="4.5" height="4" fill="#8c84d0"/><rect x="77.5" y="61" width="4.5" height="4" fill="#a49ce0"/><rect x="83.5" y="61" width="6.5" height="4" fill="#8c84d0"/>
</svg>
<div class="abs" style="left:1155px;top:109px;width:95px;height:48px;background:#3a3a3a"></div>
<svg class="abs" style="left:1190px;top:119px" width="28" height="28" viewBox="0 0 28 28">
<rect x="6" y="2" width="15" height="7" fill="#b8b8b8" stroke="#8a8a8a" stroke-width="0.8"/>
<rect x="2" y="8" width="23" height="10" rx="1.5" fill="#9c9c9c"/>
<rect x="2" y="8" width="23" height="3" fill="#c4c4c4"/>
<rect x="6" y="16" width="15" height="8" fill="#c8c8c8" stroke="#8a8a8a" stroke-width="0.8"/>
<path d="M8 19 H19 M8 21.5 H19" stroke="#8a8a8a" stroke-width="0.8"/>
</svg>
</div>
<div class="abs" style="left:0;top:594px;width:1280px;height:3px;background:linear-gradient(#1c3a58 0,#1c3a58 33%,#2c6cac 33%,#2c6cac 67%,#1c3a58 67%)"></div>
<div id="footer">
<div class="abs" style="left:7px;top:0px;font-size:14px;line-height:16px;color:#f0f0f0;white-space:nowrap;transform-origin:0 50%;transform:scaleX(0.885);font-weight:bold;">TELEDYNE</div>
<div class="abs" style="left:78px;top:0px;font-size:14px;line-height:16px;color:#d8d8d8;white-space:nowrap;transform-origin:0 50%;transform:scaleX(0.775);">LECROY</div>
<div class="abs" style="left:1138px;top:0px;width:126px;height:16px;background:linear-gradient(90deg,#242424,#181818 12%,#181818);border-right:2px solid #000;box-sizing:border-box"></div>
<div class="abs" style="left:1139px;top:0px;font-size:12px;line-height:16px;color:#f0f0f0;white-space:nowrap;">4/28/2016 11:46:27 AM</div>
</div>
</body></html>
